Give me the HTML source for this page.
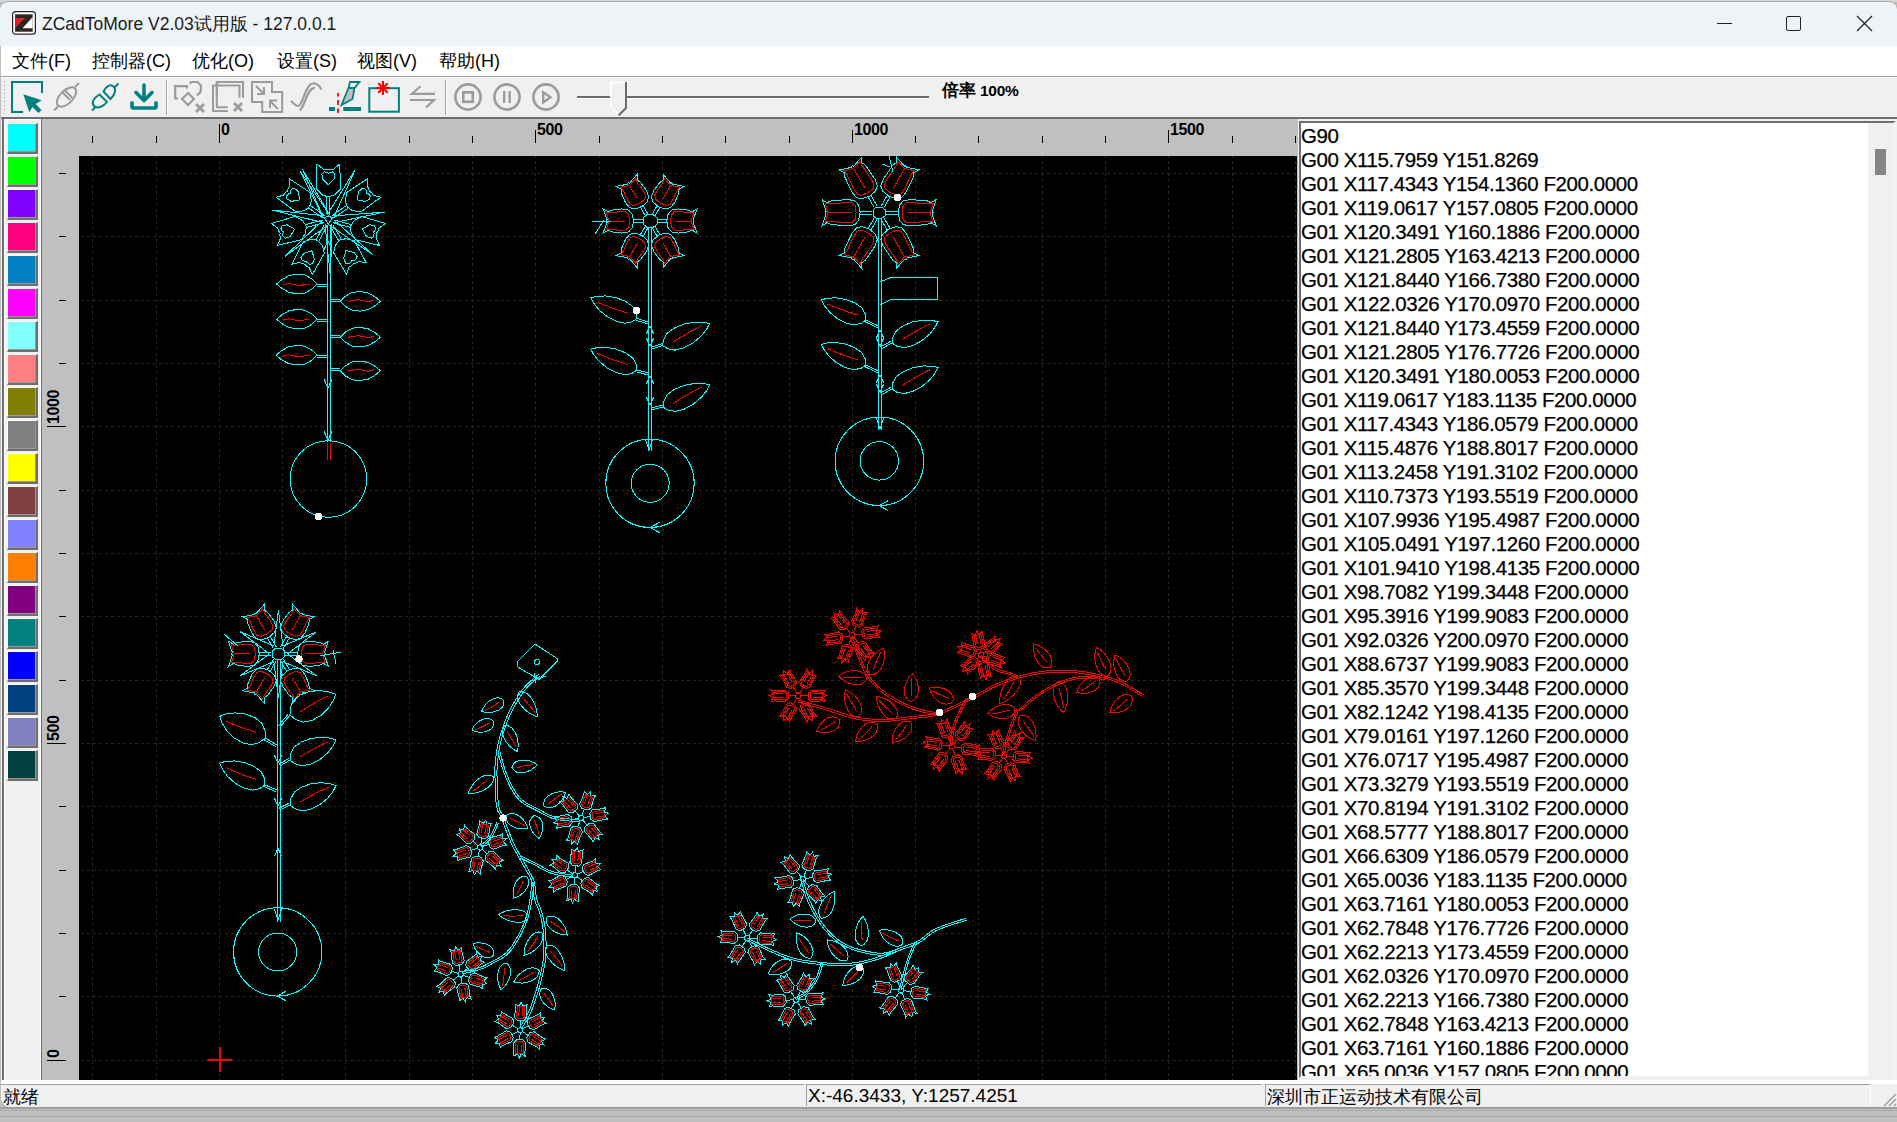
<!DOCTYPE html><html><head><meta charset="utf-8"><style>
*{margin:0;padding:0;box-sizing:border-box}
html,body{width:1897px;height:1122px;overflow:hidden;background:#bfbfbf;font-family:"Liberation Sans",sans-serif;}
.ab{position:absolute}
#title{left:0px;top:1px;width:1897px;height:45px;background:#edf3f7;border-radius:8px 8px 0 0;border-top:1.5px solid #a8a8a8}
#topstrip{left:0;top:0;width:1897px;height:2px;background:#d8d8d8}
#menu{left:1px;top:46px;width:1896px;height:30px;background:#fff}
.mi{position:absolute;top:49px;font-size:18px;color:#000;white-space:nowrap}
#tb{left:1px;top:76px;width:1896px;height:43px;background:#f0f0f0;border-top:1px solid #a0a0a0;border-bottom:2px solid #6e6e6e;box-shadow:inset 0 1px 0 #fff}
#main{left:1px;top:119px;width:1896px;height:967px;background:#f0f0f0}
#pal{left:2px;top:119px;width:39px;height:961px;background:#f0f0f0;border-left:2px solid #6e6e6e;border-right:1px solid #fff;box-shadow:inset 1px 1px 0 #fff}
#pald{left:41px;top:119px;width:1px;height:961px;background:#6e6e6e}
.sw{position:absolute;left:7px;width:31px;height:31px;border-top:1px solid #fff;border-left:1px solid #fff;border-right:2px solid #6e6e6e;border-bottom:2px solid #6e6e6e;box-shadow:inset -1px -1px 0 #a09595}
#rul{left:42px;top:119px;width:1256px;height:961px;background:#c0c0c0}
#cv{left:79px;top:156px;width:1218px;height:924px;background:#000;overflow:hidden}
#txt{left:1299px;top:121px;width:597px;height:957px;background:#fff;border-top:2px solid #6e6e6e;border-left:2px solid #6e6e6e;border-bottom:2px solid #f0f0f0;border-right:3px solid #f4f4f4;overflow:hidden}
.gl{position:absolute;font-size:20.5px;letter-spacing:-0.41px;line-height:24px;color:#000;white-space:pre;-webkit-text-stroke:0.25px #000}
#sb{left:1868px;top:123px;width:25px;height:953px;background:#f0f0f0}
#thumb{left:1875px;top:149px;width:11px;height:26px;background:#858585}
#status{left:1px;top:1084px;width:1896px;height:23px;background:#f0f0f0;border-radius:0 0 0 8px;box-shadow:0 1px 0 #9a9a9a}
.st{position:absolute;top:1085px;font-size:18px;color:#000;white-space:nowrap}
.rl{position:absolute;font-size:16px;font-weight:bold;letter-spacing:-0.4px;color:#000;line-height:16px}
</style></head><body>
<div id="topstrip" class="ab"></div><div id="title" class="ab"></div>
<svg class="ab" style="left:12px;top:11px" width="24" height="24" viewBox="0 0 24 24">
<rect x="0.6" y="0.6" width="22.8" height="22.6" rx="3" fill="#fff" stroke="#2b2220" stroke-width="1.2"/>
<rect x="3.1" y="3.3" width="17.6" height="17.4" fill="#2f2524"/>
<polygon points="3.1,6.9 13,6.9 3.1,17" fill="#e3202a"/>
<polygon points="20.7,6 20.7,17.2 10.5,17.2" fill="#fff"/>
</svg>
<div class="ab" style="left:42px;top:12px;font-size:17.5px;color:#1a1a1a;white-space:nowrap">ZCadToMore V2.03试用版 - 127.0.0.1</div>
<div class="ab" style="left:1717px;top:23px;width:15px;height:1px;background:#222"></div>
<div class="ab" style="left:1786px;top:16px;width:15px;height:15px;border:1.5px solid #222;border-radius:2px"></div>
<svg class="ab" style="left:1856px;top:15px" width="17" height="17"><path d="M1 1L16 16M16 1L1 16" stroke="#222" stroke-width="1.3"/></svg>
<div id="menu" class="ab"></div>
<div class="mi" style="left:12px">文件(F)</div>
<div class="mi" style="left:92px">控制器(C)</div>
<div class="mi" style="left:192px">优化(O)</div>
<div class="mi" style="left:277px">设置(S)</div>
<div class="mi" style="left:357px">视图(V)</div>
<div class="mi" style="left:439px">帮助(H)</div>
<div id="tb" class="ab"></div>
<svg class="ab" style="left:0;top:76px" width="1100" height="42" viewBox="0 76 1100 42">
<g fill="#a8a8a8"><rect x="4" y="81" width="1" height="1"/><rect x="4" y="85" width="1" height="1"/><rect x="4" y="89" width="1" height="1"/><rect x="4" y="93" width="1" height="1"/><rect x="4" y="97" width="1" height="1"/><rect x="4" y="101" width="1" height="1"/><rect x="4" y="105" width="1" height="1"/><rect x="4" y="109" width="1" height="1"/><rect x="4" y="113" width="1" height="1"/></g>
<!-- icon1 select -->
<path d="M23 112H12V82H42V93" fill="none" stroke="#008080" stroke-width="2"/>
<polygon points="23.3,94.2 41.7,100.3 35.6,104 41.5,110 38.5,113 32.4,107 29.3,112.3" fill="#008080"/>
<!-- icon2 plug gray -->
<g fill="none" stroke="#9b9b9b" stroke-width="2">
<path d="M54 110.5L58 106.5"/><path d="M75 87L79 83"/>
<ellipse cx="66.5" cy="97" rx="6.5" ry="12" transform="rotate(45 66.5 97)"/>
<path d="M62 92L70 100M64.5 90L72.5 98"/>
</g>
<!-- icon3 unplug teal -->
<g fill="none" stroke="#008080" stroke-width="2">
<path d="M92 110.5L95.5 107"/><path d="M114.5 87.5L118.5 83.5"/>
<path d="M99.5 94.5L107 102 C103 107 97 109 94 106 C91 103 93.5 98 99.5 94.5Z"/>
<path d="M103.5 91.5L110.5 99 C115 95 116.5 89 113.5 86.5 C110.5 83.5 106 86 103.5 91.5Z"/>
</g>
<!-- icon4 download -->
<g fill="none" stroke="#008080" stroke-width="3.6" stroke-linecap="round" stroke-linejoin="round">
<path d="M144 85V100"/><path d="M136 92.5L144 100.5L152 92.5"/>
<path d="M132 101.5V106.5Q132 108 133.5 108H154.5Q156 108 156 106.5V101.5" stroke-linecap="butt"/>
</g>
<rect x="166" y="80" width="1" height="35" fill="#a0a0a0"/><rect x="167" y="80" width="1" height="35" fill="#fff"/>
<!-- icon5 -->
<g fill="none" stroke="#9b9b9b" stroke-width="2.2">
<path d="M178 98.3H175.2V86.1H186.9V88.6"/>
<path d="M189.5 83.5L191.5 82H197.5L200.8 85.3V91.5L197 95.5"/>
<path d="M188 93L194 99L188 105L182 99Z"/>
</g>
<path d="M196 104L204 112M204 104L196 112" stroke="#9b9b9b" stroke-width="2.8"/>
<!-- icon6 -->
<g fill="none" stroke="#9b9b9b" stroke-width="2">
<path d="M216.8 97.8V82H243V97.8"/>
<path d="M227.8 111H213V85.5H239.5V97.8"/>
<path d="M227.8 107.2H216.8V82"/>
</g>
<path d="M234 103L242 111M242 103L234 111" stroke="#9b9b9b" stroke-width="2.8"/>
<!-- icon7 -->
<g fill="none" stroke="#9b9b9b" stroke-width="2">
<path d="M252 82H272V92H282.2V112H262.2V102H252Z"/>
<path d="M256 86L264 94M257 94H264V87"/>
<path d="M278 109L270 101M277 100.5H270V108"/>
</g>
<!-- icon8 S -->
<g fill="none" stroke="#9b9b9b" stroke-width="2.2">
<path d="M291 101C294 104 296 106 298 106C303 106 305 84 313 83.5C317 83 319.5 86 321.5 89.5"/>
<path d="M300 110.3C305 106 307 88 315 87.5"/>
</g>
<!-- icon9 knife -->
<path d="M338 93V96.5M338 100V105M338 108.5V113" stroke="#ff0000" stroke-width="1.8"/>
<rect x="329" y="107" width="6" height="4" fill="#008080"/><rect x="343.3" y="107" width="17.7" height="4" fill="#008080"/>
<polygon points="349,88.5 354,88.5 352,98 342,104.5" fill="#c0c0c0"/>
<path d="M350 82H359.5L354.5 88H348.5Z M348.5 88L341.5 105L352.5 99L354.5 88" fill="none" stroke="#008080" stroke-width="1.8" stroke-linejoin="miter"/>
<!-- icon10 -->
<rect x="369.3" y="88.2" width="29.6" height="23.5" fill="none" stroke="#008080" stroke-width="2"/>
<path d="M383 81V95M376 88H390M378.3 83.3L387.7 92.7M387.7 83.3L378.3 92.7" stroke="#ff0000" stroke-width="2"/>
<!-- icon11 -->
<g fill="none" stroke="#9b9b9b" stroke-width="2.2">
<path d="M435 93.8H412L420.5 86.3"/><path d="M410 100H434L426 107.5"/>
</g>
<rect x="445" y="80" width="1" height="35" fill="#a0a0a0"/><rect x="446" y="80" width="1" height="35" fill="#fff"/>
<!-- circles -->
<g fill="none" stroke="#9b9b9b" stroke-width="2.6">
<circle cx="468" cy="97" r="12.6"/><rect x="463.3" y="92.3" width="9.5" height="9.5"/>
<circle cx="507" cy="97" r="12.6"/>
<circle cx="546" cy="97" r="12.6"/>
</g>
<rect x="503" y="91" width="2.3" height="12" fill="#9b9b9b"/><rect x="508.5" y="91" width="2.3" height="12" fill="#9b9b9b"/>
<path d="M543.2 92.3V102.5L550.5 97.3Z" fill="none" stroke="#9b9b9b" stroke-width="2.4"/>
<!-- slider -->
<rect x="577" y="96" width="352" height="2" fill="#6b6b6b"/><rect x="577" y="98" width="352" height="1" fill="#fff"/>
<path d="M611 107.5V82.5H626" fill="#f0f0f0" stroke="#fff" stroke-width="1.5"/>
<path d="M611.2 82.5H625.8V107.5L618.5 115L611.2 107.5Z" fill="#f0f0f0" stroke="none"/>
<path d="M611.2 107.5V82.5H625.5" fill="none" stroke="#fff" stroke-width="1.5"/>
<path d="M611.6 107.6L618.3 114.5" fill="none" stroke="#fff" stroke-width="1.2"/>
<path d="M626 82V108L618.5 115.5" fill="none" stroke="#6b6b6b" stroke-width="2"/>
</svg>
<div class="ab" style="left:942px;top:79px;font-size:17px;font-weight:bold;color:#000;white-space:nowrap;letter-spacing:0px">倍率<span style="font-size:15.5px;margin-left:4px;letter-spacing:-0.3px">100%</span></div>

<div id="main" class="ab"></div>
<div id="pal" class="ab"></div><div id="pald" class="ab"></div>
<div class="sw" style="top:123px;background:#00ffff"></div>
<div class="sw" style="top:156px;background:#00ff00"></div>
<div class="sw" style="top:189px;background:#8000ff"></div>
<div class="sw" style="top:222px;background:#ff0080"></div>
<div class="sw" style="top:255px;background:#0080c0"></div>
<div class="sw" style="top:288px;background:#ff00ff"></div>
<div class="sw" style="top:321px;background:#80ffff"></div>
<div class="sw" style="top:354px;background:#ff8080"></div>
<div class="sw" style="top:387px;background:#808000"></div>
<div class="sw" style="top:420px;background:#808080"></div>
<div class="sw" style="top:453px;background:#ffff00"></div>
<div class="sw" style="top:486px;background:#804040"></div>
<div class="sw" style="top:519px;background:#8080ff"></div>
<div class="sw" style="top:552px;background:#ff8000"></div>
<div class="sw" style="top:585px;background:#800080"></div>
<div class="sw" style="top:618px;background:#008080"></div>
<div class="sw" style="top:651px;background:#0000ff"></div>
<div class="sw" style="top:684px;background:#004080"></div>
<div class="sw" style="top:717px;background:#8080c0"></div>
<div class="sw" style="top:750px;background:#004040"></div>
<div id="rul" class="ab"></div>
<div class="ab" style="left:92px;top:136px;width:1px;height:7px;background:#000"></div>
<div class="ab" style="left:156px;top:136px;width:1px;height:7px;background:#000"></div>
<div class="ab" style="left:219px;top:124px;width:1px;height:19px;background:#000"></div>
<div class="rl" style="left:221px;top:122px">0</div>
<div class="ab" style="left:282px;top:136px;width:1px;height:7px;background:#000"></div>
<div class="ab" style="left:345px;top:136px;width:1px;height:7px;background:#000"></div>
<div class="ab" style="left:409px;top:136px;width:1px;height:7px;background:#000"></div>
<div class="ab" style="left:472px;top:136px;width:1px;height:7px;background:#000"></div>
<div class="ab" style="left:535px;top:130px;width:1px;height:13px;background:#000"></div>
<div class="rl" style="left:537px;top:122px">500</div>
<div class="ab" style="left:599px;top:136px;width:1px;height:7px;background:#000"></div>
<div class="ab" style="left:662px;top:136px;width:1px;height:7px;background:#000"></div>
<div class="ab" style="left:725px;top:136px;width:1px;height:7px;background:#000"></div>
<div class="ab" style="left:789px;top:136px;width:1px;height:7px;background:#000"></div>
<div class="ab" style="left:852px;top:130px;width:1px;height:13px;background:#000"></div>
<div class="rl" style="left:854px;top:122px">1000</div>
<div class="ab" style="left:915px;top:136px;width:1px;height:7px;background:#000"></div>
<div class="ab" style="left:978px;top:136px;width:1px;height:7px;background:#000"></div>
<div class="ab" style="left:1042px;top:136px;width:1px;height:7px;background:#000"></div>
<div class="ab" style="left:1105px;top:136px;width:1px;height:7px;background:#000"></div>
<div class="ab" style="left:1168px;top:130px;width:1px;height:13px;background:#000"></div>
<div class="rl" style="left:1170px;top:122px">1500</div>
<div class="ab" style="left:1232px;top:136px;width:1px;height:7px;background:#000"></div>
<div class="ab" style="left:1295px;top:136px;width:1px;height:7px;background:#000"></div>
<div class="ab" style="left:47px;top:1060px;width:19px;height:1px;background:#000"></div>
<div class="rl" style="left:46px;top:1058px;transform-origin:0 0;transform:rotate(-90deg)">0</div>
<div class="ab" style="left:59px;top:996px;width:7px;height:1px;background:#000"></div>
<div class="ab" style="left:59px;top:933px;width:7px;height:1px;background:#000"></div>
<div class="ab" style="left:59px;top:870px;width:7px;height:1px;background:#000"></div>
<div class="ab" style="left:59px;top:806px;width:7px;height:1px;background:#000"></div>
<div class="ab" style="left:47px;top:743px;width:19px;height:1px;background:#000"></div>
<div class="rl" style="left:46px;top:741px;transform-origin:0 0;transform:rotate(-90deg)">500</div>
<div class="ab" style="left:59px;top:680px;width:7px;height:1px;background:#000"></div>
<div class="ab" style="left:59px;top:616px;width:7px;height:1px;background:#000"></div>
<div class="ab" style="left:59px;top:553px;width:7px;height:1px;background:#000"></div>
<div class="ab" style="left:59px;top:490px;width:7px;height:1px;background:#000"></div>
<div class="ab" style="left:47px;top:426px;width:19px;height:1px;background:#000"></div>
<div class="rl" style="left:46px;top:424px;transform-origin:0 0;transform:rotate(-90deg)">1000</div>
<div class="ab" style="left:59px;top:363px;width:7px;height:1px;background:#000"></div>
<div class="ab" style="left:59px;top:300px;width:7px;height:1px;background:#000"></div>
<div class="ab" style="left:59px;top:236px;width:7px;height:1px;background:#000"></div>
<div class="ab" style="left:59px;top:173px;width:7px;height:1px;background:#000"></div>
<div id="cv" class="ab"><svg width="1218" height="924" style="position:absolute;left:0;top:0">
<g stroke="#242424" stroke-width="1" stroke-dasharray="3,3" shape-rendering="crispEdges"><line x1="13.5" y1="0" x2="13.5" y2="924" stroke-dashoffset="1"/><line x1="77.5" y1="0" x2="77.5" y2="924" stroke-dashoffset="1"/><line x1="140.5" y1="0" x2="140.5" y2="924" stroke-dashoffset="1"/><line x1="203.5" y1="0" x2="203.5" y2="924" stroke-dashoffset="1"/><line x1="266.5" y1="0" x2="266.5" y2="924" stroke-dashoffset="1"/><line x1="330.5" y1="0" x2="330.5" y2="924" stroke-dashoffset="1"/><line x1="393.5" y1="0" x2="393.5" y2="924" stroke-dashoffset="1"/><line x1="456.5" y1="0" x2="456.5" y2="924" stroke-dashoffset="1"/><line x1="520.5" y1="0" x2="520.5" y2="924" stroke-dashoffset="1"/><line x1="583.5" y1="0" x2="583.5" y2="924" stroke-dashoffset="1"/><line x1="646.5" y1="0" x2="646.5" y2="924" stroke-dashoffset="1"/><line x1="710.5" y1="0" x2="710.5" y2="924" stroke-dashoffset="1"/><line x1="773.5" y1="0" x2="773.5" y2="924" stroke-dashoffset="1"/><line x1="836.5" y1="0" x2="836.5" y2="924" stroke-dashoffset="1"/><line x1="899.5" y1="0" x2="899.5" y2="924" stroke-dashoffset="1"/><line x1="963.5" y1="0" x2="963.5" y2="924" stroke-dashoffset="1"/><line x1="1026.5" y1="0" x2="1026.5" y2="924" stroke-dashoffset="1"/><line x1="1089.5" y1="0" x2="1089.5" y2="924" stroke-dashoffset="1"/><line x1="1153.5" y1="0" x2="1153.5" y2="924" stroke-dashoffset="1"/><line x1="1216.5" y1="0" x2="1216.5" y2="924" stroke-dashoffset="1"/><line x1="0" y1="904.5" x2="1218" y2="904.5" stroke-dashoffset="4"/><line x1="0" y1="840.5" x2="1218" y2="840.5" stroke-dashoffset="4"/><line x1="0" y1="777.5" x2="1218" y2="777.5" stroke-dashoffset="4"/><line x1="0" y1="714.5" x2="1218" y2="714.5" stroke-dashoffset="4"/><line x1="0" y1="650.5" x2="1218" y2="650.5" stroke-dashoffset="4"/><line x1="0" y1="587.5" x2="1218" y2="587.5" stroke-dashoffset="4"/><line x1="0" y1="524.5" x2="1218" y2="524.5" stroke-dashoffset="4"/><line x1="0" y1="460.5" x2="1218" y2="460.5" stroke-dashoffset="4"/><line x1="0" y1="397.5" x2="1218" y2="397.5" stroke-dashoffset="4"/><line x1="0" y1="334.5" x2="1218" y2="334.5" stroke-dashoffset="4"/><line x1="0" y1="270.5" x2="1218" y2="270.5" stroke-dashoffset="4"/><line x1="0" y1="207.5" x2="1218" y2="207.5" stroke-dashoffset="4"/><line x1="0" y1="144.5" x2="1218" y2="144.5" stroke-dashoffset="4"/><line x1="0" y1="80.5" x2="1218" y2="80.5" stroke-dashoffset="4"/><line x1="0" y1="17.5" x2="1218" y2="17.5" stroke-dashoffset="4"/></g>
<g transform="translate(-79,-156)" fill="none" stroke-width="1" shape-rendering="crispEdges">
<path d="M322.4 195.0 L328.4 197.0 L334.4 195.0 L340.4 189.0 L339.8 164.0 L333.8 169.0 L330.8 169.0 L328.4 170.0 L326.0 169.0 L323.0 169.0 L317.0 164.0 L316.4 189.0 Z" stroke="#00ffff" fill="none"/>
<path d="M328.4 184.9 L322.4 178.9 L321.9 173.9 L324.4 171.9 L327.4 172.4 L328.4 173.4 L329.4 172.4 L332.4 171.9 L334.9 173.9 L334.4 178.9 Z" stroke="#00ffff" fill="none"/>
<path d="M326.9 214.0 L326.9 196.0" stroke="#00ffff" fill="none"/>
<path d="M329.9 214.0 L329.9 196.0" stroke="#00ffff" fill="none"/>
<path d="M345.4 200.7 L347.2 206.8 L352.3 210.6 L360.7 212.0 L380.8 197.2 L373.3 195.2 L371.6 192.7 L369.4 191.3 L368.8 188.8 L367.1 186.3 L367.7 178.5 L346.9 192.4 Z" stroke="#00ffff" fill="none"/>
<path d="M357.1 199.9 L358.6 191.5 L362.4 188.3 L365.5 189.2 L366.8 191.9 L366.5 193.3 L367.9 193.5 L370.1 195.7 L369.9 198.9 L365.5 201.4 Z" stroke="#00ffff" fill="none"/>
<path d="M332.5 215.3 L347.2 205.0" stroke="#00ffff" fill="none"/>
<path d="M334.2 217.8 L348.9 207.5" stroke="#00ffff" fill="none"/>
<path d="M354.1 220.7 L350.6 226.0 L351.0 232.3 L355.2 239.6 L379.5 245.5 L376.3 238.4 L377.0 235.5 L376.7 232.9 L378.3 230.9 L379.1 228.0 L385.4 223.5 L361.4 216.4 Z" stroke="#00ffff" fill="none"/>
<path d="M362.3 229.1 L369.6 224.8 L374.6 225.6 L375.8 228.6 L374.6 231.3 L373.4 232.0 L374.1 233.3 L373.8 236.3 L371.2 238.2 L366.5 236.4 Z" stroke="#00ffff" fill="none"/>
<path d="M334.6 220.1 L352.0 224.8" stroke="#00ffff" fill="none"/>
<path d="M333.8 223.0 L351.2 227.7" stroke="#00ffff" fill="none"/>
<path d="M346.1 238.7 L339.9 239.9 L335.7 244.7 L333.5 252.8 L346.5 274.2 L349.2 266.9 L351.8 265.4 L353.4 263.3 L356.0 263.0 L358.6 261.5 L366.3 262.8 L354.3 240.8 Z" stroke="#00ffff" fill="none"/>
<path d="M345.9 250.4 L354.1 252.6 L357.1 256.6 L355.9 259.6 L353.0 260.7 L351.7 260.3 L351.3 261.7 L349.0 263.6 L345.8 263.1 L343.7 258.6 Z" stroke="#00ffff" fill="none"/>
<path d="M332.7 224.4 L341.7 240.0" stroke="#00ffff" fill="none"/>
<path d="M330.1 225.9 L339.1 241.5" stroke="#00ffff" fill="none"/>
<path d="M322.0 244.9 L317.6 240.3 L311.4 239.3 L303.3 241.7 L292.0 264.1 L299.7 262.5 L302.3 263.9 L304.9 264.1 L306.6 266.2 L309.2 267.6 L312.2 274.8 L324.4 253.0 Z" stroke="#00ffff" fill="none"/>
<path d="M311.9 250.9 L314.4 259.1 L312.5 263.7 L309.4 264.3 L307.0 262.5 L306.5 261.1 L305.2 261.5 L302.3 260.5 L301.0 257.6 L303.8 253.4 Z" stroke="#00ffff" fill="none"/>
<path d="M326.9 226.0 L318.5 241.9" stroke="#00ffff" fill="none"/>
<path d="M324.3 224.6 L315.8 240.5" stroke="#00ffff" fill="none"/>
<path d="M305.8 232.3 L306.2 226.0 L302.7 220.7 L295.4 216.4 L271.4 223.5 L277.7 228.0 L278.5 230.9 L280.1 232.9 L279.8 235.5 L280.5 238.4 L277.3 245.5 L301.6 239.6 Z" stroke="#00ffff" fill="none"/>
<path d="M294.5 229.1 L290.3 236.4 L285.6 238.2 L283.0 236.3 L282.7 233.3 L283.4 232.0 L282.2 231.3 L281.0 228.6 L282.2 225.6 L287.2 224.8 Z" stroke="#00ffff" fill="none"/>
<path d="M323.0 223.0 L305.6 227.7" stroke="#00ffff" fill="none"/>
<path d="M322.2 220.1 L304.8 224.8" stroke="#00ffff" fill="none"/>
<path d="M304.5 210.6 L309.6 206.8 L311.4 200.7 L309.9 192.4 L289.1 178.5 L289.7 186.3 L288.0 188.8 L287.4 191.3 L285.2 192.7 L283.5 195.2 L276.0 197.2 L296.1 212.0 Z" stroke="#00ffff" fill="none"/>
<path d="M299.7 199.9 L291.3 201.4 L286.9 198.9 L286.7 195.7 L288.9 193.5 L290.3 193.3 L290.0 191.9 L291.3 189.2 L294.4 188.3 L298.2 191.5 Z" stroke="#00ffff" fill="none"/>
<path d="M322.6 217.8 L307.9 207.5" stroke="#00ffff" fill="none"/>
<path d="M324.3 215.3 L309.6 205.0" stroke="#00ffff" fill="none"/>
<path d="M323.5 218.0 L302.5 169.2 L329.7 214.8" stroke="#00ffff" fill="none"/>
<path d="M327.2 214.8 L355.2 169.7 L333.4 218.1" stroke="#00ffff" fill="none"/>
<path d="M331.9 216.0 L384.8 212.1 L332.8 222.9" stroke="#00ffff" fill="none"/>
<path d="M333.7 219.7 L373.3 255.1 L329.4 225.2" stroke="#00ffff" fill="none"/>
<path d="M332.0 223.9 L330.4 277.0 L325.0 224.1" stroke="#00ffff" fill="none"/>
<path d="M327.6 225.3 L284.7 256.6 L323.1 219.9" stroke="#00ffff" fill="none"/>
<path d="M323.9 222.8 L272.3 210.1 L325.1 215.9" stroke="#00ffff" fill="none"/>
<path d="M323.4 218.3 L299.9 170.6 L329.4 214.8" stroke="#00ffff" fill="none"/>
<path d="M324.4 218.0 L328.4 216.0 L332.4 218.0 L328.4 224.0 Z" stroke="#00ffff" fill="none"/>
<path d="M327.5 226.0 L327.5 442.0" stroke="#00ffff" fill="none"/>
<path d="M330.0 226.0 L330.0 442.0" stroke="#00ffff" fill="none"/>
<path d="M327.0 443.0 L327.0 460.0" stroke="#ff0000" fill="none"/>
<path d="M330.5 443.0 L330.5 460.0" stroke="#ff0000" fill="none"/>
<circle cx="328.4" cy="479.0" r="38.3" stroke="#00ffff" fill="none"/>
<path d="M317.0 284.0 L312.2 288.9 L304.9 293.0 L296.8 293.8 L288.7 292.3 L281.9 288.4 L276.6 284.0 L281.9 279.6 L288.7 275.7 L296.8 274.2 L304.9 275.0 L312.2 279.1 Z" stroke="#00ffff" fill="none"/>
<path d="M308.9 284.0 L298.8 285.6 L288.7 283.6 L282.7 285.0" stroke="#ff0000" fill="none"/>
<path d="M317.0 284.0 L327.0 284.0" stroke="#00ffff" fill="none"/>
<path d="M317.0 286.0 L327.0 286.0" stroke="#00ffff" fill="none"/>
<path d="M317.0 319.2 L312.2 324.1 L304.9 328.2 L296.8 328.9 L288.7 327.5 L281.9 323.6 L276.6 319.2 L281.9 314.8 L288.7 310.9 L296.8 309.4 L304.9 310.2 L312.2 314.3 Z" stroke="#00ffff" fill="none"/>
<path d="M308.9 319.2 L298.8 320.8 L288.7 318.8 L282.7 320.2" stroke="#ff0000" fill="none"/>
<path d="M317.0 319.2 L327.0 319.2" stroke="#00ffff" fill="none"/>
<path d="M317.0 321.2 L327.0 321.2" stroke="#00ffff" fill="none"/>
<path d="M317.0 355.2 L312.1 360.1 L304.7 364.2 L296.5 364.9 L288.3 363.5 L281.3 359.6 L276.0 355.2 L281.3 350.8 L288.3 346.9 L296.5 345.4 L304.7 346.2 L312.1 350.3 Z" stroke="#00ffff" fill="none"/>
<path d="M308.8 355.2 L298.6 356.8 L288.3 354.8 L282.1 356.2" stroke="#ff0000" fill="none"/>
<path d="M317.0 355.2 L327.0 355.2" stroke="#00ffff" fill="none"/>
<path d="M317.0 357.2 L327.0 357.2" stroke="#00ffff" fill="none"/>
<path d="M340.3 301.3 L345.1 296.4 L352.3 292.3 L360.3 291.6 L368.3 293.0 L375.1 296.9 L380.3 301.3 L375.1 305.7 L368.3 309.6 L360.3 311.1 L352.3 310.3 L345.1 306.2 Z" stroke="#00ffff" fill="none"/>
<path d="M348.3 301.3 L358.3 299.7 L368.3 301.7 L374.3 300.3" stroke="#ff0000" fill="none"/>
<path d="M340.3 301.3 L330.5 301.3" stroke="#00ffff" fill="none"/>
<path d="M340.3 299.3 L330.5 299.3" stroke="#00ffff" fill="none"/>
<path d="M340.3 337.2 L345.1 332.3 L352.3 328.2 L360.3 327.4 L368.3 328.9 L375.1 332.8 L380.3 337.2 L375.1 341.6 L368.3 345.5 L360.3 346.9 L352.3 346.2 L345.1 342.1 Z" stroke="#00ffff" fill="none"/>
<path d="M348.3 337.2 L358.3 335.6 L368.3 337.6 L374.3 336.2" stroke="#ff0000" fill="none"/>
<path d="M340.3 337.2 L330.5 337.2" stroke="#00ffff" fill="none"/>
<path d="M340.3 335.2 L330.5 335.2" stroke="#00ffff" fill="none"/>
<path d="M340.3 370.8 L345.1 365.9 L352.3 361.8 L360.3 361.1 L368.3 362.5 L375.1 366.4 L380.3 370.8 L375.1 375.2 L368.3 379.1 L360.3 380.6 L352.3 379.8 L345.1 375.7 Z" stroke="#00ffff" fill="none"/>
<path d="M348.3 370.8 L358.3 369.2 L368.3 371.2 L374.3 369.8" stroke="#ff0000" fill="none"/>
<path d="M340.3 370.8 L330.5 370.8" stroke="#00ffff" fill="none"/>
<path d="M340.3 368.8 L330.5 368.8" stroke="#00ffff" fill="none"/>
<path d="M328.0 241.0 L332.2 250.1" stroke="#00ffff" fill="none"/>
<path d="M328.0 241.0 L323.8 250.1" stroke="#00ffff" fill="none"/>
<path d="M328.0 388.0 L323.8 378.9" stroke="#00ffff" fill="none"/>
<path d="M328.0 388.0 L332.2 378.9" stroke="#00ffff" fill="none"/>
<path d="M328.0 440.0 L323.8 430.9" stroke="#00ffff" fill="none"/>
<path d="M328.0 440.0 L332.2 430.9" stroke="#00ffff" fill="none"/>
<circle cx="318.5" cy="516.5" r="3.6" fill="#fff" stroke="none"/>
<path d="M641.9 206.7 L635.1 208.9 L629.9 207.8 L625.4 202.4 L621.6 193.6 L621.1 189.2 L616.1 186.3 L627.6 184.3 L628.1 182.9 L629.6 183.2 L637.1 174.3 L637.1 180.0 L640.6 182.6 L646.3 190.3 L648.8 196.9 L647.1 202.0 Z" stroke="#00ffff" fill="none"/>
<path d="M639.9 203.2 L633.9 205.5 L630.1 204.3 L626.4 198.3 L623.6 191.3 L620.6 187.2 L629.6 185.5 L635.6 178.6 L637.6 183.2 L642.3 189.1 L645.6 195.3 L644.8 199.2 Z" stroke="#ff0000" fill="none"/>
<path d="M637.4 198.9 L629.6 185.5" stroke="#ff0000" fill="none"/>
<path d="M645.2 215.7 L640.0 206.6" stroke="#00ffff" fill="none"/>
<path d="M648.0 214.1 L642.7 205.0" stroke="#00ffff" fill="none"/>
<path d="M658.4 206.7 L653.1 202.0 L651.4 196.9 L653.9 190.3 L659.6 182.6 L663.1 180.0 L663.1 174.3 L670.6 183.2 L672.1 182.9 L672.6 184.3 L684.1 186.3 L679.1 189.2 L678.6 193.6 L674.8 202.4 L670.3 207.8 L665.1 208.9 Z" stroke="#00ffff" fill="none"/>
<path d="M660.4 203.2 L655.4 199.2 L654.6 195.3 L657.9 189.1 L662.6 183.2 L664.6 178.6 L670.6 185.5 L679.6 187.2 L676.6 191.3 L673.8 198.3 L670.1 204.3 L666.3 205.5 Z" stroke="#ff0000" fill="none"/>
<path d="M662.9 198.9 L670.6 185.5" stroke="#ff0000" fill="none"/>
<path d="M652.2 214.1 L657.5 205.0" stroke="#00ffff" fill="none"/>
<path d="M655.0 215.7 L660.2 206.6" stroke="#00ffff" fill="none"/>
<path d="M666.6 221.0 L668.1 214.1 L671.6 210.1 L678.6 208.9 L688.1 210.1 L692.1 211.8 L697.1 208.9 L693.1 219.8 L694.1 221.0 L693.1 222.2 L697.1 233.1 L692.1 230.2 L688.1 231.9 L678.6 233.1 L671.6 231.9 L668.1 227.9 Z" stroke="#00ffff" fill="none"/>
<path d="M670.6 221.0 L671.6 214.7 L674.6 212.0 L681.6 211.8 L689.1 212.9 L694.1 212.4 L691.1 221.0 L694.1 229.6 L689.1 229.1 L681.6 230.2 L674.6 230.0 L671.6 227.3 Z" stroke="#ff0000" fill="none"/>
<path d="M675.6 221.0 L691.1 221.0" stroke="#ff0000" fill="none"/>
<path d="M657.1 219.4 L667.6 219.4" stroke="#00ffff" fill="none"/>
<path d="M657.1 222.6 L667.6 222.6" stroke="#00ffff" fill="none"/>
<path d="M658.4 235.3 L665.1 233.1 L670.3 234.2 L674.8 239.6 L678.6 248.4 L679.1 252.8 L684.1 255.7 L672.6 257.7 L672.1 259.1 L670.6 258.8 L663.1 267.7 L663.1 262.0 L659.6 259.4 L653.9 251.7 L651.4 245.1 L653.1 240.0 Z" stroke="#00ffff" fill="none"/>
<path d="M660.4 238.8 L666.3 236.5 L670.1 237.7 L673.8 243.7 L676.6 250.7 L679.6 254.8 L670.6 256.5 L664.6 263.4 L662.6 258.8 L657.9 252.9 L654.6 246.7 L655.4 242.8 Z" stroke="#ff0000" fill="none"/>
<path d="M662.9 243.1 L670.6 256.5" stroke="#ff0000" fill="none"/>
<path d="M655.0 226.3 L660.2 235.4" stroke="#00ffff" fill="none"/>
<path d="M652.2 227.9 L657.5 237.0" stroke="#00ffff" fill="none"/>
<path d="M641.9 235.3 L647.1 240.0 L648.8 245.1 L646.3 251.7 L640.6 259.4 L637.1 262.0 L637.1 267.7 L629.6 258.8 L628.1 259.1 L627.6 257.7 L616.1 255.7 L621.1 252.8 L621.6 248.4 L625.4 239.6 L629.9 234.2 L635.1 233.1 Z" stroke="#00ffff" fill="none"/>
<path d="M639.9 238.8 L644.8 242.8 L645.6 246.7 L642.3 252.9 L637.6 258.8 L635.6 263.4 L629.6 256.5 L620.6 254.8 L623.6 250.7 L626.4 243.7 L630.1 237.7 L633.9 236.5 Z" stroke="#ff0000" fill="none"/>
<path d="M637.4 243.1 L629.6 256.5" stroke="#ff0000" fill="none"/>
<path d="M648.0 227.9 L642.7 237.0" stroke="#00ffff" fill="none"/>
<path d="M645.2 226.3 L640.0 235.4" stroke="#00ffff" fill="none"/>
<path d="M633.6 221.0 L632.1 227.9 L628.6 231.9 L621.6 233.1 L612.1 231.9 L608.1 230.2 L603.1 233.1 L607.1 222.2 L606.1 221.0 L607.1 219.8 L603.1 208.9 L608.1 211.8 L612.1 210.1 L621.6 208.9 L628.6 210.1 L632.1 214.1 Z" stroke="#00ffff" fill="none"/>
<path d="M629.6 221.0 L628.6 227.3 L625.6 230.0 L618.6 230.2 L611.1 229.1 L606.1 229.6 L609.1 221.0 L606.1 212.4 L611.1 212.9 L618.6 211.8 L625.6 212.0 L628.6 214.7 Z" stroke="#ff0000" fill="none"/>
<path d="M624.6 221.0 L609.1 221.0" stroke="#ff0000" fill="none"/>
<path d="M643.1 222.6 L632.6 222.6" stroke="#00ffff" fill="none"/>
<path d="M643.1 219.4 L632.6 219.4" stroke="#00ffff" fill="none"/>
<path d="M643.1 218.0 L647.1 214.5 L653.1 214.5 L657.1 218.0 L657.1 224.0 L653.1 227.5 L647.1 227.5 L643.1 224.0 Z" stroke="#00ffff" fill="none"/>
<path d="M648.4 228.0 L648.4 451.0" stroke="#00ffff" fill="none"/>
<path d="M651.7 228.0 L651.7 451.0" stroke="#00ffff" fill="none"/>
<path d="M592.0 222.0 L611.0 221.0" stroke="#00ffff" fill="none"/>
<path d="M595.0 234.0 L604.0 220.0" stroke="#00ffff" fill="none"/>
<path d="M637.0 318.5 L632.2 321.8 L624.8 323.3 L616.3 321.3 L607.3 316.7 L599.1 310.0 L593.8 303.4 L590.7 297.8 L596.9 296.4 L605.4 295.9 L615.8 297.6 L625.3 301.2 L632.5 306.2 L636.2 312.7 Z" stroke="#00ffff" fill="none"/>
<path d="M628.2 313.4 L618.5 310.2 L608.9 306.9 L597.1 302.1" stroke="#ff0000" fill="none"/>
<path d="M637.0 318.5 L648.4 322.0" stroke="#00ffff" fill="none"/>
<path d="M636.4 320.4 L647.8 323.9" stroke="#00ffff" fill="none"/>
<path d="M662.7 345.6 L663.4 339.8 L667.2 333.2 L674.5 327.9 L684.1 324.0 L694.7 322.1 L703.4 322.2 L709.7 323.5 L706.6 329.2 L701.2 336.0 L693.0 342.9 L683.8 347.8 L675.1 350.1 L667.6 348.8 Z" stroke="#00ffff" fill="none"/>
<path d="M672.6 342.2 L681.5 336.8 L690.5 331.5 L702.1 325.6" stroke="#ff0000" fill="none"/>
<path d="M662.7 345.6 L651.7 349.0" stroke="#00ffff" fill="none"/>
<path d="M662.1 343.7 L651.1 347.1" stroke="#00ffff" fill="none"/>
<path d="M637.0 370.0 L632.2 373.3 L624.8 374.8 L616.3 372.7 L607.2 368.0 L599.1 361.3 L593.7 354.7 L590.7 349.1 L596.9 347.7 L605.4 347.3 L615.8 349.0 L625.3 352.7 L632.5 357.7 L636.3 364.2 Z" stroke="#00ffff" fill="none"/>
<path d="M628.2 364.8 L618.5 361.6 L608.9 358.3 L597.1 353.4" stroke="#ff0000" fill="none"/>
<path d="M637.0 370.0 L648.4 373.0" stroke="#00ffff" fill="none"/>
<path d="M636.5 371.9 L647.9 374.9" stroke="#00ffff" fill="none"/>
<path d="M663.0 407.0 L663.7 401.2 L667.4 394.6 L674.6 389.3 L684.2 385.4 L694.7 383.4 L703.4 383.5 L709.7 384.8 L706.7 390.5 L701.3 397.3 L693.2 404.2 L684.1 409.2 L675.4 411.4 L667.9 410.1 Z" stroke="#00ffff" fill="none"/>
<path d="M672.8 403.6 L681.7 398.1 L690.6 392.9 L702.1 386.9" stroke="#ff0000" fill="none"/>
<path d="M663.0 407.0 L651.7 410.0" stroke="#00ffff" fill="none"/>
<path d="M662.5 405.1 L651.2 408.1" stroke="#00ffff" fill="none"/>
<path d="M650.0 326.0 L653.8 334.2" stroke="#00ffff" fill="none"/>
<path d="M650.0 326.0 L646.2 334.2" stroke="#00ffff" fill="none"/>
<path d="M650.0 346.0 L646.2 337.8" stroke="#00ffff" fill="none"/>
<path d="M650.0 346.0 L653.8 337.8" stroke="#00ffff" fill="none"/>
<path d="M650.0 376.0 L653.8 384.2" stroke="#00ffff" fill="none"/>
<path d="M650.0 376.0 L646.2 384.2" stroke="#00ffff" fill="none"/>
<path d="M650.0 405.0 L646.2 396.8" stroke="#00ffff" fill="none"/>
<path d="M650.0 405.0 L653.8 396.8" stroke="#00ffff" fill="none"/>
<path d="M649.0 450.0 L645.3 438.6" stroke="#00ffff" fill="none"/>
<path d="M649.0 450.0 L652.7 438.6" stroke="#00ffff" fill="none"/>
<circle cx="650.0" cy="483.3" r="44.2" stroke="#00ffff" fill="none"/>
<circle cx="650.2" cy="483.3" r="19.0" stroke="#00ffff" fill="none"/>
<path d="M650.0 527.5 L659.7 522.3" stroke="#00ffff" fill="none"/>
<path d="M650.0 527.5 L659.7 532.7" stroke="#00ffff" fill="none"/>
<circle cx="636.5" cy="310.5" r="3.6" fill="#fff" stroke="none"/>
<path d="M869.6 196.2 L862.4 198.7 L856.8 197.9 L852.2 192.4 L844.8 177.1 L844.4 172.7 L839.2 169.9 L851.5 167.4 L852.1 165.9 L853.7 166.2 L862.0 156.8 L861.8 162.7 L865.4 165.2 L875.0 179.3 L877.4 186.0 L875.3 191.2 Z" stroke="#00ffff" fill="none"/>
<path d="M867.6 192.8 L861.1 195.4 L857.2 194.2 L853.4 188.3 L847.0 174.6 L844.0 170.6 L853.6 168.5 L860.2 161.2 L862.2 165.9 L870.8 178.3 L874.0 184.4 L873.1 188.5 Z" stroke="#ff0000" fill="none"/>
<path d="M865.1 188.5 L853.6 168.5" stroke="#ff0000" fill="none"/>
<path d="M874.2 207.4 L867.7 196.2" stroke="#00ffff" fill="none"/>
<path d="M877.0 205.8 L870.5 194.6" stroke="#00ffff" fill="none"/>
<path d="M888.6 196.2 L882.9 191.2 L880.8 186.0 L883.2 179.3 L892.8 165.2 L896.4 162.7 L896.2 156.8 L904.5 166.2 L906.1 165.9 L906.7 167.4 L919.0 169.9 L913.8 172.7 L913.4 177.1 L906.0 192.4 L901.4 197.9 L895.8 198.7 Z" stroke="#00ffff" fill="none"/>
<path d="M890.6 192.8 L885.1 188.5 L884.2 184.4 L887.4 178.3 L896.0 165.9 L898.0 161.2 L904.6 168.5 L914.2 170.6 L911.2 174.6 L904.8 188.3 L901.0 194.2 L897.1 195.4 Z" stroke="#ff0000" fill="none"/>
<path d="M893.1 188.5 L904.6 168.5" stroke="#ff0000" fill="none"/>
<path d="M881.2 205.8 L887.7 194.6" stroke="#00ffff" fill="none"/>
<path d="M884.0 207.4 L890.5 196.2" stroke="#00ffff" fill="none"/>
<path d="M898.1 212.7 L899.6 205.2 L903.1 200.8 L910.1 199.6 L927.1 200.8 L931.1 202.7 L936.1 199.6 L932.1 211.4 L933.1 212.7 L932.1 213.9 L936.1 225.8 L931.1 222.7 L927.1 224.6 L910.1 225.8 L903.1 224.6 L899.6 220.2 Z" stroke="#00ffff" fill="none"/>
<path d="M902.1 212.7 L903.1 205.8 L906.1 202.9 L913.1 202.7 L928.1 203.9 L933.1 203.3 L930.1 212.7 L933.1 222.1 L928.1 221.4 L913.1 222.7 L906.1 222.4 L903.1 219.6 Z" stroke="#ff0000" fill="none"/>
<path d="M907.1 212.7 L930.1 212.7" stroke="#ff0000" fill="none"/>
<path d="M886.1 211.1 L899.1 211.1" stroke="#00ffff" fill="none"/>
<path d="M886.1 214.3 L899.1 214.3" stroke="#00ffff" fill="none"/>
<path d="M888.6 229.2 L895.8 226.7 L901.4 227.5 L906.0 233.0 L913.4 248.3 L913.8 252.7 L919.0 255.5 L906.7 258.0 L906.1 259.5 L904.5 259.2 L896.2 268.6 L896.4 262.7 L892.8 260.2 L883.2 246.1 L880.8 239.4 L882.9 234.2 Z" stroke="#00ffff" fill="none"/>
<path d="M890.6 232.6 L897.1 230.0 L901.0 231.2 L904.8 237.1 L911.2 250.8 L914.2 254.8 L904.6 256.9 L898.0 264.2 L896.0 259.5 L887.4 247.1 L884.2 241.0 L885.1 236.9 Z" stroke="#ff0000" fill="none"/>
<path d="M893.1 236.9 L904.6 256.9" stroke="#ff0000" fill="none"/>
<path d="M884.0 218.0 L890.5 229.2" stroke="#00ffff" fill="none"/>
<path d="M881.2 219.6 L887.7 230.8" stroke="#00ffff" fill="none"/>
<path d="M869.6 229.2 L875.3 234.2 L877.4 239.4 L875.0 246.1 L865.4 260.2 L861.8 262.7 L862.0 268.6 L853.7 259.2 L852.1 259.5 L851.5 258.0 L839.2 255.5 L844.4 252.7 L844.8 248.3 L852.2 233.0 L856.8 227.5 L862.4 226.7 Z" stroke="#00ffff" fill="none"/>
<path d="M867.6 232.6 L873.1 236.9 L874.0 241.0 L870.8 247.1 L862.2 259.5 L860.2 264.2 L853.6 256.9 L844.0 254.8 L847.0 250.8 L853.4 237.1 L857.2 231.2 L861.1 230.0 Z" stroke="#ff0000" fill="none"/>
<path d="M865.1 236.9 L853.6 256.9" stroke="#ff0000" fill="none"/>
<path d="M877.0 219.6 L870.5 230.8" stroke="#00ffff" fill="none"/>
<path d="M874.2 218.0 L867.7 229.2" stroke="#00ffff" fill="none"/>
<path d="M860.1 212.7 L858.6 220.2 L855.1 224.6 L848.1 225.8 L831.1 224.6 L827.1 222.7 L822.1 225.8 L826.1 213.9 L825.1 212.7 L826.1 211.4 L822.1 199.6 L827.1 202.7 L831.1 200.8 L848.1 199.6 L855.1 200.8 L858.6 205.2 Z" stroke="#00ffff" fill="none"/>
<path d="M856.1 212.7 L855.1 219.6 L852.1 222.4 L845.1 222.7 L830.1 221.4 L825.1 222.1 L828.1 212.7 L825.1 203.3 L830.1 203.9 L845.1 202.7 L852.1 202.9 L855.1 205.8 Z" stroke="#ff0000" fill="none"/>
<path d="M851.1 212.7 L828.1 212.7" stroke="#ff0000" fill="none"/>
<path d="M872.1 214.3 L859.1 214.3" stroke="#00ffff" fill="none"/>
<path d="M872.1 211.1 L859.1 211.1" stroke="#00ffff" fill="none"/>
<path d="M873.1 209.7 L876.1 207.2 L882.1 207.2 L885.1 209.7 L885.1 215.7 L882.1 218.2 L876.1 218.2 L873.1 215.7 Z" stroke="#00ffff" fill="none"/>
<path d="M878.5 219.0 L878.5 430.0" stroke="#00ffff" fill="none"/>
<path d="M881.0 219.0 L881.0 430.0" stroke="#00ffff" fill="none"/>
<path d="M880.0 282.0 L890.5 277.6 L937.6 277.6 L937.6 299.7 L890.5 299.7 L880.0 305.0" stroke="#00ffff" fill="none"/>
<path d="M889.0 156.0 L893.0 172.0" stroke="#00ffff" fill="none"/>
<path d="M882.0 164.0 L890.0 167.0" stroke="#00ffff" fill="none"/>
<path d="M866.0 320.0 L861.3 323.3 L854.1 324.9 L845.8 323.0 L837.1 318.4 L829.3 311.9 L824.2 305.3 L821.3 299.8 L827.4 298.3 L835.6 297.8 L845.7 299.4 L854.9 302.9 L861.8 307.8 L865.4 314.3 Z" stroke="#00ffff" fill="none"/>
<path d="M857.5 315.0 L848.1 311.9 L838.8 308.7 L827.5 304.0" stroke="#ff0000" fill="none"/>
<path d="M866.0 320.0 L878.5 326.0" stroke="#00ffff" fill="none"/>
<path d="M865.1 321.8 L877.6 327.8" stroke="#00ffff" fill="none"/>
<path d="M892.0 343.0 L892.7 337.2 L896.4 330.7 L903.5 325.6 L912.9 321.8 L923.3 320.1 L931.8 320.4 L938.0 321.8 L935.0 327.4 L929.7 334.1 L921.7 340.8 L912.7 345.6 L904.2 347.7 L896.8 346.2 Z" stroke="#00ffff" fill="none"/>
<path d="M901.7 339.8 L910.4 334.5 L919.2 329.5 L930.5 323.8" stroke="#ff0000" fill="none"/>
<path d="M892.0 343.0 L881.0 349.0" stroke="#00ffff" fill="none"/>
<path d="M891.0 341.2 L880.0 347.2" stroke="#00ffff" fill="none"/>
<path d="M866.0 365.0 L861.2 368.2 L854.0 369.8 L845.7 367.7 L837.0 363.1 L829.2 356.5 L824.2 349.9 L821.3 344.3 L827.4 342.9 L835.7 342.5 L845.8 344.1 L855.0 347.8 L861.9 352.8 L865.4 359.3 Z" stroke="#00ffff" fill="none"/>
<path d="M857.5 359.9 L848.1 356.7 L838.8 353.4 L827.5 348.6" stroke="#ff0000" fill="none"/>
<path d="M866.0 365.0 L878.5 371.0" stroke="#00ffff" fill="none"/>
<path d="M865.1 366.8 L877.6 372.8" stroke="#00ffff" fill="none"/>
<path d="M892.0 389.0 L892.7 383.2 L896.3 376.7 L903.4 371.5 L912.9 367.7 L923.2 365.9 L931.8 366.2 L938.0 367.5 L935.0 373.1 L929.8 379.9 L921.7 386.6 L912.8 391.4 L904.2 393.6 L896.9 392.2 Z" stroke="#00ffff" fill="none"/>
<path d="M901.7 385.7 L910.4 380.4 L919.2 375.3 L930.5 369.5" stroke="#ff0000" fill="none"/>
<path d="M892.0 389.0 L881.0 395.0" stroke="#00ffff" fill="none"/>
<path d="M891.0 387.2 L880.0 393.2" stroke="#00ffff" fill="none"/>
<path d="M880.0 330.0 L883.8 338.2" stroke="#00ffff" fill="none"/>
<path d="M880.0 330.0 L876.2 338.2" stroke="#00ffff" fill="none"/>
<path d="M880.0 346.0 L876.2 337.8" stroke="#00ffff" fill="none"/>
<path d="M880.0 346.0 L883.8 337.8" stroke="#00ffff" fill="none"/>
<path d="M880.0 375.0 L883.8 383.2" stroke="#00ffff" fill="none"/>
<path d="M880.0 375.0 L876.2 383.2" stroke="#00ffff" fill="none"/>
<path d="M880.0 392.0 L876.2 383.8" stroke="#00ffff" fill="none"/>
<path d="M880.0 392.0 L883.8 383.8" stroke="#00ffff" fill="none"/>
<path d="M880.0 429.0 L876.3 417.6" stroke="#00ffff" fill="none"/>
<path d="M880.0 429.0 L883.7 417.6" stroke="#00ffff" fill="none"/>
<circle cx="879.4" cy="461.3" r="44.3" stroke="#00ffff" fill="none"/>
<circle cx="879.3" cy="460.9" r="19.2" stroke="#00ffff" fill="none"/>
<path d="M879.0 505.6 L887.8 500.9" stroke="#00ffff" fill="none"/>
<path d="M879.0 505.6 L887.8 510.3" stroke="#00ffff" fill="none"/>
<circle cx="897.5" cy="197.5" r="3.6" fill="#fff" stroke="none"/>
<path d="M268.9 637.3 L261.9 639.6 L256.5 638.7 L252.0 633.3 L248.0 624.0 L247.6 619.6 L242.5 616.8 L254.4 614.6 L254.9 613.1 L256.4 613.4 L264.3 604.2 L264.2 610.0 L267.8 612.6 L273.8 620.7 L276.3 627.3 L274.4 632.4 Z" stroke="#00ffff" fill="none"/>
<path d="M266.9 633.9 L260.7 636.3 L256.8 635.1 L253.1 629.2 L250.1 621.6 L247.1 617.6 L256.4 615.7 L262.7 608.6 L264.7 613.2 L269.7 619.6 L273.0 625.7 L272.1 629.7 Z" stroke="#ff0000" fill="none"/>
<path d="M264.4 629.6 L256.4 615.7" stroke="#ff0000" fill="none"/>
<path d="M273.5 648.5 L267.0 637.3" stroke="#00ffff" fill="none"/>
<path d="M276.3 646.9 L269.8 635.7" stroke="#00ffff" fill="none"/>
<path d="M287.9 637.3 L282.4 632.4 L280.5 627.3 L283.0 620.7 L289.0 612.6 L292.6 610.0 L292.5 604.2 L300.4 613.4 L301.9 613.1 L302.4 614.6 L314.3 616.8 L309.2 619.6 L308.8 624.0 L304.8 633.3 L300.3 638.7 L294.9 639.6 Z" stroke="#00ffff" fill="none"/>
<path d="M289.9 633.9 L284.7 629.7 L283.8 625.7 L287.1 619.6 L292.1 613.2 L294.1 608.6 L300.4 615.7 L309.7 617.6 L306.7 621.6 L303.7 629.2 L300.0 635.1 L296.1 636.3 Z" stroke="#ff0000" fill="none"/>
<path d="M292.4 629.6 L300.4 615.7" stroke="#ff0000" fill="none"/>
<path d="M280.5 646.9 L287.0 635.7" stroke="#00ffff" fill="none"/>
<path d="M283.3 648.5 L289.8 637.3" stroke="#00ffff" fill="none"/>
<path d="M297.4 653.8 L298.9 646.6 L302.4 642.4 L309.4 641.2 L319.4 642.4 L323.4 644.2 L328.4 641.2 L324.4 652.6 L325.4 653.8 L324.4 655.0 L328.4 666.4 L323.4 663.4 L319.4 665.2 L309.4 666.4 L302.4 665.2 L298.9 661.0 Z" stroke="#00ffff" fill="none"/>
<path d="M301.4 653.8 L302.4 647.2 L305.4 644.4 L312.4 644.2 L320.4 645.4 L325.4 644.8 L322.4 653.8 L325.4 662.8 L320.4 662.2 L312.4 663.4 L305.4 663.2 L302.4 660.4 Z" stroke="#ff0000" fill="none"/>
<path d="M306.4 653.8 L322.4 653.8" stroke="#ff0000" fill="none"/>
<path d="M285.4 652.2 L298.4 652.2" stroke="#00ffff" fill="none"/>
<path d="M285.4 655.4 L298.4 655.4" stroke="#00ffff" fill="none"/>
<path d="M287.9 670.3 L294.9 668.0 L300.3 668.9 L304.8 674.3 L308.8 683.6 L309.2 688.0 L314.3 690.8 L302.4 693.0 L301.9 694.5 L300.4 694.2 L292.5 703.4 L292.6 697.6 L289.0 695.0 L283.0 686.9 L280.5 680.3 L282.4 675.2 Z" stroke="#00ffff" fill="none"/>
<path d="M289.9 673.7 L296.1 671.3 L300.0 672.5 L303.7 678.4 L306.7 686.0 L309.7 690.0 L300.4 691.9 L294.1 699.0 L292.1 694.4 L287.1 688.0 L283.8 681.9 L284.7 677.9 Z" stroke="#ff0000" fill="none"/>
<path d="M292.4 678.0 L300.4 691.9" stroke="#ff0000" fill="none"/>
<path d="M283.3 659.1 L289.8 670.3" stroke="#00ffff" fill="none"/>
<path d="M280.5 660.7 L287.0 671.9" stroke="#00ffff" fill="none"/>
<path d="M268.9 670.3 L274.4 675.2 L276.3 680.3 L273.8 686.9 L267.8 695.0 L264.2 697.6 L264.3 703.4 L256.4 694.2 L254.9 694.5 L254.4 693.0 L242.5 690.8 L247.6 688.0 L248.0 683.6 L252.0 674.3 L256.5 668.9 L261.9 668.0 Z" stroke="#00ffff" fill="none"/>
<path d="M266.9 673.7 L272.1 677.9 L273.0 681.9 L269.7 688.0 L264.7 694.4 L262.7 699.0 L256.4 691.9 L247.1 690.0 L250.1 686.0 L253.1 678.4 L256.8 672.5 L260.7 671.3 Z" stroke="#ff0000" fill="none"/>
<path d="M264.4 678.0 L256.4 691.9" stroke="#ff0000" fill="none"/>
<path d="M276.3 660.7 L269.8 671.9" stroke="#00ffff" fill="none"/>
<path d="M273.5 659.1 L267.0 670.3" stroke="#00ffff" fill="none"/>
<path d="M259.4 653.8 L257.9 661.0 L254.4 665.2 L247.4 666.4 L237.4 665.2 L233.4 663.4 L228.4 666.4 L232.4 655.0 L231.4 653.8 L232.4 652.6 L228.4 641.2 L233.4 644.2 L237.4 642.4 L247.4 641.2 L254.4 642.4 L257.9 646.6 Z" stroke="#00ffff" fill="none"/>
<path d="M255.4 653.8 L254.4 660.4 L251.4 663.2 L244.4 663.4 L236.4 662.2 L231.4 662.8 L234.4 653.8 L231.4 644.8 L236.4 645.4 L244.4 644.2 L251.4 644.4 L254.4 647.2 Z" stroke="#ff0000" fill="none"/>
<path d="M250.4 653.8 L234.4 653.8" stroke="#ff0000" fill="none"/>
<path d="M271.4 655.4 L258.4 655.4" stroke="#00ffff" fill="none"/>
<path d="M271.4 652.2 L258.4 652.2" stroke="#00ffff" fill="none"/>
<path d="M269.2 653.7 L240.3 631.8 L273.7 645.9" stroke="#00ffff" fill="none"/>
<path d="M273.9 645.8 L278.4 609.8 L282.9 645.8" stroke="#00ffff" fill="none"/>
<path d="M283.1 645.9 L316.5 631.8 L287.6 653.7" stroke="#00ffff" fill="none"/>
<path d="M287.6 653.9 L316.5 675.8 L283.1 661.7" stroke="#00ffff" fill="none"/>
<path d="M282.9 661.8 L278.4 697.8 L273.9 661.8" stroke="#00ffff" fill="none"/>
<path d="M273.7 661.7 L240.3 675.8 L269.2 653.9" stroke="#00ffff" fill="none"/>
<path d="M272.4 650.8 L275.4 648.3 L281.4 648.3 L284.4 650.8 L284.4 656.8 L281.4 659.3 L275.4 659.3 L272.4 656.8 Z" stroke="#00ffff" fill="none"/>
<path d="M277.0 660.0 L277.0 922.0" stroke="#00ffff" fill="none"/>
<path d="M280.0 660.0 L280.0 922.0" stroke="#00ffff" fill="none"/>
<path d="M224.0 634.0 L238.0 646.0" stroke="#00ffff" fill="none"/>
<path d="M320.0 656.0 L341.0 652.0" stroke="#00ffff" fill="none"/>
<path d="M333.0 650.0 L336.0 664.0" stroke="#00ffff" fill="none"/>
<path d="M290.0 715.0 L290.1 708.0 L293.3 700.4 L300.2 695.0 L309.6 691.5 L320.2 690.5 L329.1 691.9 L335.7 694.3 L333.2 700.8 L328.3 708.4 L320.6 715.7 L311.8 720.5 L303.1 722.1 L295.3 719.5 Z" stroke="#00ffff" fill="none"/>
<path d="M299.7 712.1 L308.3 706.7 L317.0 701.6 L328.2 695.9" stroke="#ff0000" fill="none"/>
<path d="M290.0 715.0 L280.0 727.0" stroke="#00ffff" fill="none"/>
<path d="M288.5 713.7 L278.5 725.7" stroke="#00ffff" fill="none"/>
<path d="M265.0 738.0 L259.6 742.4 L251.7 744.8 L243.1 743.0 L234.3 738.1 L226.7 730.6 L222.0 722.9 L219.6 716.3 L226.3 714.0 L235.2 712.9 L245.8 714.1 L255.1 717.8 L262.0 723.4 L265.0 731.0 Z" stroke="#00ffff" fill="none"/>
<path d="M256.5 732.4 L246.8 729.3 L237.3 726.0 L225.7 721.1" stroke="#ff0000" fill="none"/>
<path d="M265.0 738.0 L277.0 745.0" stroke="#00ffff" fill="none"/>
<path d="M264.0 739.7 L276.0 746.7" stroke="#00ffff" fill="none"/>
<path d="M290.0 760.0 L290.6 753.8 L294.2 747.0 L301.3 742.0 L310.8 738.5 L321.2 737.3 L329.7 738.1 L336.0 740.0 L333.1 745.9 L327.8 752.7 L319.8 759.5 L310.9 764.0 L302.3 765.8 L294.9 763.8 Z" stroke="#00ffff" fill="none"/>
<path d="M299.7 757.1 L308.4 752.0 L317.2 747.1 L328.5 741.7" stroke="#ff0000" fill="none"/>
<path d="M290.0 760.0 L280.0 766.0" stroke="#00ffff" fill="none"/>
<path d="M289.0 758.3 L279.0 764.3" stroke="#00ffff" fill="none"/>
<path d="M265.0 785.0 L259.9 788.5 L252.4 790.2 L243.9 788.1 L235.1 783.2 L227.3 776.1 L222.3 769.0 L219.6 763.0 L226.0 761.4 L234.6 760.9 L245.0 762.6 L254.3 766.5 L261.3 771.9 L264.6 778.8 Z" stroke="#00ffff" fill="none"/>
<path d="M256.4 779.5 L246.8 776.2 L237.3 772.7 L225.8 767.6" stroke="#ff0000" fill="none"/>
<path d="M265.0 785.0 L277.0 790.0" stroke="#00ffff" fill="none"/>
<path d="M264.2 786.8 L276.2 791.8" stroke="#00ffff" fill="none"/>
<path d="M290.0 805.0 L290.7 798.9 L294.3 792.1 L301.4 787.2 L310.9 783.8 L321.2 782.7 L329.8 783.7 L336.0 785.6 L333.0 791.4 L327.8 798.2 L319.7 804.8 L310.8 809.3 L302.2 810.9 L294.9 808.8 Z" stroke="#00ffff" fill="none"/>
<path d="M299.7 802.2 L308.4 797.2 L317.2 792.5 L328.5 787.2" stroke="#ff0000" fill="none"/>
<path d="M290.0 805.0 L280.0 810.0" stroke="#00ffff" fill="none"/>
<path d="M289.1 803.2 L279.1 808.2" stroke="#00ffff" fill="none"/>
<path d="M278.0 763.0 L274.2 754.8" stroke="#00ffff" fill="none"/>
<path d="M278.0 763.0 L281.8 754.8" stroke="#00ffff" fill="none"/>
<path d="M278.0 806.0 L274.2 797.8" stroke="#00ffff" fill="none"/>
<path d="M278.0 806.0 L281.8 797.8" stroke="#00ffff" fill="none"/>
<path d="M278.0 848.0 L281.4 856.3" stroke="#00ffff" fill="none"/>
<path d="M278.0 848.0 L274.6 856.3" stroke="#00ffff" fill="none"/>
<path d="M278.0 920.0 L274.3 908.6" stroke="#00ffff" fill="none"/>
<path d="M278.0 920.0 L281.7 908.6" stroke="#00ffff" fill="none"/>
<circle cx="277.7" cy="951.9" r="44.2" stroke="#00ffff" fill="none"/>
<circle cx="277.7" cy="952.0" r="19.0" stroke="#00ffff" fill="none"/>
<path d="M277.0 996.0 L285.8 991.3" stroke="#00ffff" fill="none"/>
<path d="M277.0 996.0 L285.8 1000.7" stroke="#00ffff" fill="none"/>
<circle cx="299.0" cy="659.0" r="3.6" fill="#fff" stroke="none"/>
<path d="M535.0 644.0 L557.0 658.5 L557.0 661.5 L539.0 679.5 L517.0 666.5 L517.0 662.0 Z" stroke="#00ffff" fill="none"/>
<circle cx="537.0" cy="662.0" r="2.5" stroke="#00ffff" fill="none"/>
<path d="M534.0 673.0 L536.0 683.0" stroke="#00ffff" fill="none"/>
<path d="M531.0 681.0 L546.0 676.0" stroke="#00ffff" fill="none"/>
<path d="M540.0 676.0 L538.4 677.4 L536.1 679.2 L533.4 681.4 L530.6 684.0 L527.7 686.9 L525.0 690.0 L522.4 693.5 L519.8 697.3 L517.2 701.5 L514.6 705.9 L512.2 710.4 L510.0 715.0 L508.0 719.8 L506.0 724.8 L504.2 730.0 L502.6 735.2 L501.2 740.2 L500.0 745.0 L499.1 749.6 L498.4 754.3 L497.9 758.8 L497.5 763.0 L497.2 766.8 L497.0 770.0 L496.8 772.4 L496.8 773.9 L496.9 775.0 L497.0 776.1 L497.2 777.6 L497.3 780.0 L497.4 783.5 L497.5 787.8 L497.7 792.5 L497.8 797.3 L498.2 801.7 L498.6 805.4 L499.2 808.1 L499.8 810.1 L500.6 811.7 L501.5 813.3 L502.5 815.3 L503.7 818.0 L505.1 821.5 L506.6 825.6 L508.3 830.1 L510.1 834.7 L511.9 839.3 L513.8 843.5 L515.8 847.6 L518.0 851.6 L520.3 855.6 L522.5 859.4 L524.6 863.1 L526.5 866.4 L528.1 869.3 L529.6 871.9 L530.9 874.3 L532.1 876.6 L533.2 879.0 L534.1 881.6 L534.8 884.5 L535.2 887.5 L535.6 890.7 L535.8 893.7 L536.2 896.7 L536.7 899.4 L537.4 901.7 L538.3 903.7 L539.2 905.6 L540.1 907.5 L541.0 909.6 L541.8 912.1 L542.6 915.0 L543.3 918.1 L544.0 921.5 L544.7 925.0 L545.2 928.6 L545.6 932.4 L545.9 936.4 L546.0 940.7 L546.1 945.1 L546.0 949.5 L545.9 953.8 L545.6 957.8 L545.2 961.5 L544.7 965.0 L544.0 968.4 L543.3 971.7 L542.6 974.9 L541.8 978.1 L541.0 981.2 L540.2 984.2 L539.4 987.2 L538.5 990.1 L537.6 993.0 L536.7 995.9 L535.7 998.9 L534.7 1002.0 L533.7 1005.0 L532.6 1008.0 L531.5 1010.9 L530.3 1013.7 L528.9 1016.5 L527.4 1019.3 L525.8 1022.0 L524.2 1024.4 L522.9 1026.5 L522.0 1028.0" stroke="#00ffff" fill="none"/>
<path d="M538.6 674.3 L537.0 675.7 L534.7 677.5 L532.0 679.8 L529.0 682.4 L526.0 685.4 L523.2 688.7 L520.6 692.2 L518.0 696.2 L515.3 700.4 L512.7 704.9 L510.2 709.5 L508.0 714.1 L505.9 719.0 L504.0 724.1 L502.2 729.3 L500.5 734.6 L499.1 739.7 L497.8 744.6 L496.9 749.3 L496.2 754.0 L495.7 758.6 L495.3 762.8 L495.0 766.6 L494.8 769.9 L494.6 772.3 L494.6 774.0 L494.7 775.2 L494.8 776.3 L495.0 777.8 L495.1 780.1 L495.2 783.5 L495.3 787.9 L495.5 792.6 L495.7 797.5 L496.0 802.0 L496.4 805.9 L497.1 808.8 L497.8 811.0 L498.7 812.7 L499.5 814.3 L500.5 816.2 L501.6 818.8 L503.0 822.3 L504.5 826.4 L506.2 830.9 L508.0 835.5 L509.9 840.1 L511.8 844.5 L513.9 848.6 L516.1 852.7 L518.4 856.7 L520.6 860.5 L522.7 864.1 L524.6 867.5 L526.2 870.4 L527.7 873.0 L529.0 875.3 L530.1 877.5 L531.1 879.7 L532.0 882.1 L532.6 884.8 L533.1 887.7 L533.4 890.9 L533.6 894.0 L534.0 897.1 L534.6 900.1 L535.4 902.6 L536.3 904.7 L537.2 906.6 L538.1 908.3 L538.9 910.3 L539.7 912.7 L540.4 915.5 L541.2 918.6 L541.9 921.9 L542.5 925.3 L543.0 928.9 L543.4 932.5 L543.7 936.5 L543.8 940.7 L543.9 945.1 L543.8 949.4 L543.7 953.7 L543.4 957.6 L543.0 961.2 L542.5 964.6 L541.9 968.0 L541.2 971.2 L540.4 974.4 L539.7 977.6 L538.9 980.6 L538.1 983.6 L537.3 986.5 L536.4 989.4 L535.5 992.3 L534.6 995.2 L533.6 998.2 L532.6 1001.3 L531.6 1004.3 L530.6 1007.2 L529.5 1010.1 L528.3 1012.7 L527.0 1015.4 L525.5 1018.1 L523.9 1020.8 L522.4 1023.3 L521.0 1025.3 L520.1 1026.9" stroke="#00ffff" fill="none"/>
<path d="M500.0 752.0 L500.7 754.5 L501.6 758.0 L502.7 762.1 L504.0 766.5 L505.4 770.9 L507.0 775.0 L508.7 779.0 L510.6 783.1 L512.7 787.2 L514.9 791.1 L517.4 794.8 L520.0 798.0 L523.0 800.7 L526.3 803.0 L529.9 805.0 L533.4 806.8 L536.9 808.4 L540.0 810.0 L542.7 811.5 L545.0 812.9 L547.2 814.1 L549.5 815.1 L552.0 816.1 L555.0 817.0 L558.8 817.8 L563.2 818.4 L567.9 818.9 L572.4 819.4 L576.3 819.7 L579.0 820.0" stroke="#00ffff" fill="none"/>
<path d="M498.1 752.5 L498.8 755.0 L499.7 758.5 L500.8 762.6 L502.1 767.1 L503.5 771.6 L505.2 775.8 L506.9 779.8 L508.8 784.0 L510.9 788.2 L513.3 792.3 L515.8 796.1 L518.7 799.5 L521.9 802.3 L525.3 804.7 L529.0 806.8 L532.6 808.6 L536.0 810.2 L539.0 811.7 L541.7 813.2 L544.1 814.6 L546.4 815.9 L548.8 817.0 L551.5 818.0 L554.6 819.0 L558.5 819.7 L563.0 820.4 L567.7 820.9 L572.3 821.4 L576.1 821.7 L578.8 822.0" stroke="#00ffff" fill="none"/>
<path d="M534.0 881.6 L533.8 883.8 L533.5 886.9 L533.1 890.5 L532.7 894.5 L532.2 898.4 L531.6 902.0 L531.0 905.4 L530.3 908.7 L529.5 912.1 L528.7 915.5 L527.7 918.8 L526.5 922.2 L525.1 925.7 L523.5 929.3 L521.8 932.9 L520.0 936.4 L518.1 939.6 L516.4 942.6 L514.7 945.2 L513.1 947.6 L511.5 949.8 L509.8 951.7 L508.0 953.6 L506.2 955.3 L504.2 956.9 L502.2 958.3 L500.0 959.5 L497.8 960.7 L495.6 961.8 L493.5 962.9 L491.5 964.0 L489.5 965.2 L487.5 966.2 L485.5 967.3 L483.3 968.3 L480.8 969.2 L477.8 970.1 L474.3 971.1 L470.6 972.0 L467.1 972.8 L464.1 973.5 L462.0 974.0" stroke="#00ffff" fill="none"/>
<path d="M532.0 881.4 L531.8 883.6 L531.5 886.7 L531.1 890.3 L530.7 894.2 L530.2 898.1 L529.6 901.6 L529.0 905.0 L528.3 908.3 L527.6 911.6 L526.8 914.9 L525.8 918.2 L524.6 921.5 L523.3 924.9 L521.7 928.4 L520.0 931.9 L518.2 935.4 L516.4 938.6 L514.7 941.5 L513.1 944.1 L511.5 946.4 L509.9 948.5 L508.3 950.4 L506.7 952.1 L505.0 953.7 L503.1 955.2 L501.2 956.5 L499.1 957.7 L496.9 958.9 L494.7 960.0 L492.5 961.2 L490.5 962.3 L488.5 963.4 L486.6 964.4 L484.7 965.4 L482.6 966.4 L480.2 967.3 L477.3 968.2 L473.8 969.1 L470.2 970.0 L466.7 970.9 L463.7 971.5 L461.5 972.1" stroke="#00ffff" fill="none"/>
<path d="M521.4 856.2 L523.1 857.0 L525.4 858.2 L528.1 859.5 L531.0 861.0 L534.0 862.4 L536.7 863.8 L539.2 865.1 L541.6 866.5 L543.9 867.8 L546.4 869.1 L549.0 870.3 L551.9 871.4 L555.3 872.3 L559.3 873.1 L563.4 873.8 L567.3 874.4 L570.6 874.9 L573.0 875.3" stroke="#00ffff" fill="none"/>
<path d="M520.5 858.0 L522.2 858.8 L524.5 860.0 L527.2 861.3 L530.2 862.8 L533.1 864.2 L535.8 865.6 L538.2 866.8 L540.6 868.2 L543.0 869.6 L545.6 871.0 L548.3 872.2 L551.4 873.3 L554.9 874.3 L558.9 875.1 L563.1 875.8 L567.0 876.4 L570.3 876.9 L572.7 877.3" stroke="#00ffff" fill="none"/>
<path d="M498.6 823.0 L497.8 824.8 L496.7 827.2 L495.4 830.2 L494.0 833.2 L492.5 836.0 L491.0 838.4 L489.4 840.3 L487.5 842.1 L485.5 843.7 L483.7 845.0 L482.1 846.1 L481.0 847.0" stroke="#00ffff" fill="none"/>
<path d="M497.0 822.3 L496.2 824.0 L495.1 826.5 L493.8 829.4 L492.4 832.4 L491.0 835.1 L489.6 837.2 L488.1 839.0 L486.3 840.7 L484.5 842.2 L482.6 843.6 L481.0 844.7 L479.9 845.6" stroke="#00ffff" fill="none"/>
<path d="M504.0 700.6 L503.9 703.8 L502.3 707.3 L498.9 710.0 L494.3 711.8 L489.2 712.6 L484.9 712.2 L481.7 711.3 L483.0 708.3 L485.4 704.7 L489.2 701.1 L493.5 698.7 L497.7 697.7 L501.4 698.7 Z" stroke="#00ffff" fill="none"/>
<path d="M499.3 702.2 L495.1 704.9 L490.8 707.5 L485.4 710.4" stroke="#ff0000" fill="none"/>
<path d="M494.0 722.0 L493.6 725.1 L491.8 728.4 L488.4 730.7 L483.9 732.0 L478.9 732.1 L474.9 731.3 L471.9 730.0 L473.4 727.1 L475.9 723.9 L479.8 720.8 L484.1 718.9 L488.2 718.4 L491.7 719.8 Z" stroke="#00ffff" fill="none"/>
<path d="M489.4 723.0 L485.2 725.2 L480.9 727.3 L475.5 729.5" stroke="#ff0000" fill="none"/>
<path d="M519.0 691.7 L522.4 691.5 L526.5 693.1 L530.4 696.8 L533.7 701.9 L536.0 707.8 L537.0 712.8 L537.0 716.6 L533.4 715.4 L529.0 712.9 L524.1 708.9 L520.2 704.1 L517.9 699.3 L517.8 694.8 Z" stroke="#00ffff" fill="none"/>
<path d="M522.1 697.0 L526.2 701.7 L530.2 706.3 L534.9 712.4" stroke="#ff0000" fill="none"/>
<path d="M504.9 725.6 L508.2 725.9 L511.9 727.9 L514.9 731.9 L517.1 737.2 L518.1 743.1 L518.0 747.9 L517.3 751.4 L514.1 749.8 L510.3 746.8 L506.4 742.4 L503.6 737.3 L502.3 732.5 L503.1 728.4 Z" stroke="#00ffff" fill="none"/>
<path d="M506.8 731.0 L509.9 735.9 L512.8 740.9 L516.1 747.2" stroke="#ff0000" fill="none"/>
<path d="M512.0 767.5 L513.2 764.5 L515.9 761.7 L520.1 760.3 L525.1 760.1 L530.3 761.1 L534.3 762.9 L537.0 764.8 L534.7 767.2 L531.2 769.8 L526.4 771.9 L521.4 772.8 L517.1 772.3 L513.8 770.1 Z" stroke="#00ffff" fill="none"/>
<path d="M517.1 767.6 L522.0 766.4 L526.9 765.4 L533.2 764.5" stroke="#ff0000" fill="none"/>
<path d="M493.3 776.4 L493.4 779.7 L491.8 783.8 L488.1 787.5 L482.9 790.6 L477.0 792.7 L472.0 793.4 L468.3 793.3 L469.6 789.8 L472.1 785.5 L476.2 780.8 L481.0 777.1 L485.8 775.0 L490.2 775.1 Z" stroke="#00ffff" fill="none"/>
<path d="M487.9 779.3 L483.3 783.2 L478.6 787.0 L472.5 791.4" stroke="#ff0000" fill="none"/>
<path d="M544.0 805.8 L543.8 802.6 L545.1 798.9 L548.2 795.8 L552.7 793.4 L557.8 792.0 L562.2 791.9 L565.5 792.4 L564.5 795.6 L562.4 799.5 L559.0 803.5 L554.8 806.4 L550.7 807.9 L546.8 807.4 Z" stroke="#00ffff" fill="none"/>
<path d="M548.6 803.7 L552.6 800.4 L556.6 797.3 L561.9 793.8" stroke="#ff0000" fill="none"/>
<path d="M506.2 815.6 L508.9 813.9 L512.8 813.3 L516.9 814.7 L521.1 817.5 L524.6 821.4 L526.7 825.1 L527.8 828.3 L524.5 828.9 L520.2 828.9 L515.1 827.7 L510.6 825.4 L507.4 822.5 L506.1 818.8 Z" stroke="#00ffff" fill="none"/>
<path d="M510.2 818.7 L514.8 820.7 L519.4 822.8 L524.9 825.7" stroke="#ff0000" fill="none"/>
<path d="M534.1 815.6 L537.2 816.4 L540.2 818.5 L542.0 822.2 L542.7 826.8 L542.2 831.7 L540.8 835.6 L539.2 838.4 L536.6 836.6 L533.7 833.7 L531.1 829.4 L529.8 824.9 L529.8 820.9 L531.7 817.6 Z" stroke="#00ffff" fill="none"/>
<path d="M534.5 820.3 L536.1 824.7 L537.6 829.2 L539.2 834.8" stroke="#ff0000" fill="none"/>
<path d="M526.5 876.5 L528.2 879.2 L528.8 883.1 L527.4 887.2 L524.6 891.4 L520.7 894.9 L517.0 897.0 L513.8 898.1 L513.2 894.8 L513.2 890.5 L514.4 885.4 L516.7 880.9 L519.6 877.7 L523.3 876.4 Z" stroke="#00ffff" fill="none"/>
<path d="M523.4 880.5 L521.4 885.1 L519.3 889.7 L516.4 895.2" stroke="#ff0000" fill="none"/>
<path d="M529.0 917.0 L527.0 919.7 L523.1 921.9 L517.9 922.4 L511.8 921.6 L505.9 919.6 L501.5 917.0 L498.6 914.6 L501.8 912.7 L506.5 910.8 L512.7 909.8 L518.9 909.9 L523.9 911.3 L527.4 914.1 Z" stroke="#00ffff" fill="none"/>
<path d="M523.0 915.9 L516.8 916.0 L510.7 916.1 L503.1 915.7" stroke="#ff0000" fill="none"/>
<path d="M546.8 917.2 L549.9 916.1 L554.0 916.4 L558.0 918.7 L561.9 922.5 L565.0 927.3 L566.6 931.6 L567.2 935.0 L563.7 934.9 L559.2 933.8 L554.1 931.5 L549.8 928.1 L547.0 924.4 L546.2 920.4 Z" stroke="#00ffff" fill="none"/>
<path d="M550.5 921.2 L555.0 924.3 L559.4 927.5 L564.6 931.8" stroke="#ff0000" fill="none"/>
<path d="M541.8 932.4 L543.0 935.5 L542.8 939.8 L540.5 944.3 L536.7 948.6 L531.9 952.3 L527.5 954.4 L524.0 955.3 L524.1 951.7 L525.0 946.9 L527.3 941.4 L530.6 936.6 L534.4 933.3 L538.5 932.0 Z" stroke="#00ffff" fill="none"/>
<path d="M537.7 936.6 L534.7 941.6 L531.5 946.4 L527.3 952.3" stroke="#ff0000" fill="none"/>
<path d="M546.8 945.1 L550.2 945.0 L554.4 946.6 L558.1 950.4 L561.5 955.7 L563.7 961.6 L564.6 966.7 L564.6 970.5 L561.0 969.2 L556.6 966.7 L551.7 962.5 L547.9 957.6 L545.7 952.7 L545.6 948.2 Z" stroke="#00ffff" fill="none"/>
<path d="M549.8 950.5 L553.9 955.3 L557.9 960.1 L562.5 966.3" stroke="#ff0000" fill="none"/>
<path d="M539.2 970.5 L538.8 973.8 L536.8 977.4 L532.9 980.2 L527.7 982.2 L522.0 983.1 L517.2 982.8 L513.8 982.0 L515.4 978.9 L518.3 975.1 L522.8 971.4 L527.7 968.8 L532.4 967.7 L536.5 968.6 Z" stroke="#00ffff" fill="none"/>
<path d="M533.9 972.2 L529.0 975.1 L524.2 977.9 L517.9 981.0" stroke="#ff0000" fill="none"/>
<path d="M541.8 988.3 L545.0 988.2 L548.7 989.5 L551.6 992.7 L553.9 997.2 L555.1 1002.3 L555.1 1006.6 L554.5 1009.9 L551.3 1008.8 L547.6 1006.7 L543.7 1003.2 L540.9 999.0 L539.5 994.9 L540.1 991.0 Z" stroke="#00ffff" fill="none"/>
<path d="M543.8 992.9 L546.9 996.9 L549.9 1001.0 L553.2 1006.3" stroke="#ff0000" fill="none"/>
<path d="M493.5 955.3 L490.9 957.1 L487.2 957.9 L483.3 956.7 L479.4 954.1 L476.1 950.5 L474.2 946.9 L473.2 943.8 L476.3 943.0 L480.4 942.9 L485.3 943.8 L489.5 945.8 L492.5 948.6 L493.7 952.2 Z" stroke="#00ffff" fill="none"/>
<path d="M489.7 952.5 L485.4 950.7 L481.1 948.8 L475.9 946.2" stroke="#ff0000" fill="none"/>
<path d="M506.2 962.9 L508.7 965.0 L510.5 968.7 L510.6 973.4 L509.2 978.7 L506.7 983.7 L503.8 987.3 L501.1 989.6 L499.5 986.5 L498.1 982.1 L497.6 976.5 L498.3 971.1 L500.1 966.7 L503.1 964.0 Z" stroke="#00ffff" fill="none"/>
<path d="M504.6 968.1 L504.2 973.6 L503.6 979.0 L502.6 985.7" stroke="#ff0000" fill="none"/>
<path d="M470.9 843.3 L466.7 843.5 L459.3 836.0 L456.7 834.5 L461.0 832.7 L459.2 828.7 L463.4 830.0 L464.7 825.5 L466.5 828.0 L474.7 834.6 L474.9 838.8 Z" stroke="#00ffff" fill="none"/>
<path d="M469.8 841.5 L467.2 841.4 L460.0 834.4 L465.0 828.9 L472.7 835.3 L473.1 837.9 Z" stroke="#ff0000" fill="none"/>
<path d="M468.0 839.0 L461.7 833.3" stroke="#ff0000" fill="none"/>
<path d="M470.4 836.4 L464.1 830.7" stroke="#ff0000" fill="none"/>
<path d="M478.5 846.1 L472.9 841.0" stroke="#00ffff" fill="none"/>
<path d="M479.0 837.5 L476.7 833.9 L479.5 823.8 L479.5 820.7 L483.2 823.6 L485.8 820.0 L486.8 824.3 L491.3 823.2 L490.1 826.0 L488.5 836.4 L484.9 838.7 Z" stroke="#00ffff" fill="none"/>
<path d="M480.0 835.7 L478.8 833.3 L481.2 823.6 L488.5 825.2 L486.8 835.0 L484.7 836.7 Z" stroke="#ff0000" fill="none"/>
<path d="M481.3 832.8 L483.0 824.5" stroke="#ff0000" fill="none"/>
<path d="M484.8 833.6 L486.5 825.3" stroke="#ff0000" fill="none"/>
<path d="M480.4 845.4 L482.0 838.1" stroke="#00ffff" fill="none"/>
<path d="M488.1 841.6 L490.0 837.8 L500.2 835.2 L502.9 833.7 L502.3 838.3 L506.6 838.7 L503.4 841.7 L506.6 845.1 L503.5 845.4 L493.7 849.2 L490.0 847.3 Z" stroke="#00ffff" fill="none"/>
<path d="M490.2 841.6 L491.6 839.3 L501.2 836.6 L503.5 843.7 L494.1 847.1 L491.7 846.1 Z" stroke="#ff0000" fill="none"/>
<path d="M493.2 841.2 L501.3 838.6" stroke="#ff0000" fill="none"/>
<path d="M494.3 844.6 L502.4 842.0" stroke="#ff0000" fill="none"/>
<path d="M481.9 846.8 L489.0 844.5" stroke="#00ffff" fill="none"/>
<path d="M489.1 851.5 L493.3 851.3 L500.7 858.8 L503.3 860.3 L499.0 862.1 L500.8 866.1 L496.6 864.8 L495.3 869.3 L493.5 866.8 L485.3 860.2 L485.1 856.0 Z" stroke="#00ffff" fill="none"/>
<path d="M490.2 853.3 L492.8 853.4 L500.0 860.4 L495.0 865.9 L487.3 859.5 L486.9 856.9 Z" stroke="#ff0000" fill="none"/>
<path d="M492.0 855.8 L498.3 861.5" stroke="#ff0000" fill="none"/>
<path d="M489.6 858.4 L495.9 864.1" stroke="#ff0000" fill="none"/>
<path d="M481.5 848.7 L487.1 853.8" stroke="#00ffff" fill="none"/>
<path d="M481.0 857.3 L483.3 860.9 L480.5 871.0 L480.5 874.1 L476.8 871.2 L474.2 874.8 L473.2 870.5 L468.7 871.6 L469.9 868.8 L471.5 858.4 L475.1 856.1 Z" stroke="#00ffff" fill="none"/>
<path d="M480.0 859.1 L481.2 861.5 L478.8 871.2 L471.5 869.6 L473.2 859.8 L475.3 858.1 Z" stroke="#ff0000" fill="none"/>
<path d="M478.7 862.0 L477.0 870.3" stroke="#ff0000" fill="none"/>
<path d="M475.2 861.2 L473.5 869.5" stroke="#ff0000" fill="none"/>
<path d="M479.6 849.4 L478.0 856.7" stroke="#00ffff" fill="none"/>
<path d="M471.9 853.2 L470.0 857.0 L459.8 859.6 L457.1 861.1 L457.7 856.5 L453.4 856.1 L456.6 853.1 L453.4 849.7 L456.5 849.4 L466.3 845.6 L470.0 847.5 Z" stroke="#00ffff" fill="none"/>
<path d="M469.8 853.2 L468.4 855.5 L458.8 858.2 L456.5 851.1 L465.9 847.7 L468.3 848.7 Z" stroke="#ff0000" fill="none"/>
<path d="M466.8 853.6 L458.7 856.2" stroke="#ff0000" fill="none"/>
<path d="M465.7 850.2 L457.6 852.8" stroke="#ff0000" fill="none"/>
<path d="M478.1 848.0 L471.0 850.3" stroke="#00ffff" fill="none"/>
<path d="M477.5 845.9 L480.0 844.4 L482.5 845.9 L482.5 848.9 L480.0 850.4 L477.5 848.9 Z" stroke="#00ffff" fill="none"/>
<path d="M572.6 812.7 L568.4 812.3 L562.1 803.9 L559.7 801.9 L564.2 800.8 L563.0 796.6 L567.0 798.5 L568.9 794.2 L570.4 796.9 L577.6 804.6 L577.2 808.8 Z" stroke="#00ffff" fill="none"/>
<path d="M571.8 810.7 L569.2 810.3 L563.0 802.4 L568.7 797.6 L575.4 805.0 L575.4 807.6 Z" stroke="#ff0000" fill="none"/>
<path d="M570.3 808.0 L564.8 801.5" stroke="#ff0000" fill="none"/>
<path d="M573.1 805.7 L567.6 799.2" stroke="#ff0000" fill="none"/>
<path d="M579.7 816.5 L574.9 810.7" stroke="#00ffff" fill="none"/>
<path d="M581.4 808.0 L579.6 804.2 L583.8 794.5 L584.3 791.5 L587.5 794.8 L590.6 791.7 L590.9 796.1 L595.5 795.6 L593.9 798.2 L590.9 808.3 L587.1 810.1 Z" stroke="#00ffff" fill="none"/>
<path d="M582.7 806.4 L581.8 803.9 L585.5 794.6 L592.5 797.2 L589.5 806.7 L587.2 808.0 Z" stroke="#ff0000" fill="none"/>
<path d="M584.3 803.8 L587.2 795.8" stroke="#ff0000" fill="none"/>
<path d="M587.7 805.0 L590.6 797.0" stroke="#ff0000" fill="none"/>
<path d="M581.7 816.1 L584.2 809.1" stroke="#00ffff" fill="none"/>
<path d="M589.8 813.4 L592.3 809.9 L602.7 808.7 L605.6 807.6 L604.3 812.1 L608.6 813.1 L604.9 815.6 L607.6 819.4 L604.6 819.3 L594.4 821.7 L590.9 819.3 Z" stroke="#00ffff" fill="none"/>
<path d="M591.9 813.6 L593.6 811.6 L603.5 810.3 L604.8 817.6 L595.0 819.7 L592.7 818.4 Z" stroke="#ff0000" fill="none"/>
<path d="M595.0 813.7 L603.3 812.2" stroke="#ff0000" fill="none"/>
<path d="M595.6 817.3 L604.0 815.8" stroke="#ff0000" fill="none"/>
<path d="M583.0 817.7 L590.4 816.4" stroke="#00ffff" fill="none"/>
<path d="M589.4 823.3 L593.6 823.7 L599.9 832.1 L602.3 834.1 L597.8 835.2 L599.0 839.4 L595.0 837.5 L593.1 841.8 L591.6 839.1 L584.4 831.4 L584.8 827.2 Z" stroke="#00ffff" fill="none"/>
<path d="M590.2 825.3 L592.8 825.7 L599.0 833.6 L593.3 838.4 L586.6 831.0 L586.6 828.4 Z" stroke="#ff0000" fill="none"/>
<path d="M591.7 828.0 L597.2 834.5" stroke="#ff0000" fill="none"/>
<path d="M588.9 830.3 L594.4 836.8" stroke="#ff0000" fill="none"/>
<path d="M582.3 819.5 L587.1 825.3" stroke="#00ffff" fill="none"/>
<path d="M580.6 828.0 L582.4 831.8 L578.2 841.5 L577.7 844.5 L574.5 841.2 L571.4 844.3 L571.1 839.9 L566.5 840.4 L568.1 837.8 L571.1 827.7 L574.9 825.9 Z" stroke="#00ffff" fill="none"/>
<path d="M579.3 829.6 L580.2 832.1 L576.5 841.4 L569.5 838.8 L572.5 829.3 L574.8 828.0 Z" stroke="#ff0000" fill="none"/>
<path d="M577.7 832.2 L574.8 840.2" stroke="#ff0000" fill="none"/>
<path d="M574.3 831.0 L571.4 839.0" stroke="#ff0000" fill="none"/>
<path d="M580.3 819.9 L577.8 826.9" stroke="#00ffff" fill="none"/>
<path d="M572.2 822.6 L569.7 826.1 L559.3 827.3 L556.4 828.4 L557.7 823.9 L553.4 822.9 L557.1 820.4 L554.4 816.6 L557.4 816.7 L567.6 814.3 L571.1 816.7 Z" stroke="#00ffff" fill="none"/>
<path d="M570.1 822.4 L568.4 824.4 L558.5 825.7 L557.2 818.4 L567.0 816.3 L569.3 817.6 Z" stroke="#ff0000" fill="none"/>
<path d="M567.0 822.3 L558.7 823.8" stroke="#ff0000" fill="none"/>
<path d="M566.4 818.7 L558.0 820.2" stroke="#ff0000" fill="none"/>
<path d="M579.0 818.3 L571.6 819.6" stroke="#00ffff" fill="none"/>
<path d="M578.5 816.5 L581.0 815.0 L583.5 816.5 L583.5 819.5 L581.0 821.0 L578.5 819.5 Z" stroke="#00ffff" fill="none"/>
<path d="M565.3 872.3 L561.1 873.0 L552.9 866.5 L550.1 865.3 L554.1 863.0 L551.9 859.2 L556.2 860.1 L556.9 855.5 L559.1 857.7 L568.0 863.2 L568.7 867.4 Z" stroke="#00ffff" fill="none"/>
<path d="M564.0 870.7 L561.4 870.9 L553.4 864.9 L557.7 858.8 L566.1 864.2 L566.8 866.7 Z" stroke="#ff0000" fill="none"/>
<path d="M561.9 868.5 L554.9 863.6" stroke="#ff0000" fill="none"/>
<path d="M564.0 865.5 L557.0 860.6" stroke="#ff0000" fill="none"/>
<path d="M573.2 874.2 L567.0 869.9" stroke="#00ffff" fill="none"/>
<path d="M572.6 865.6 L569.9 862.3 L571.4 851.9 L571.1 848.9 L575.1 851.2 L577.2 847.4 L578.7 851.5 L583.0 849.9 L582.2 852.9 L581.9 863.4 L578.6 866.1 Z" stroke="#00ffff" fill="none"/>
<path d="M573.4 863.6 L571.9 861.5 L573.1 851.6 L580.6 852.2 L580.0 862.2 L578.2 864.1 Z" stroke="#ff0000" fill="none"/>
<path d="M574.3 860.7 L575.0 852.2" stroke="#ff0000" fill="none"/>
<path d="M577.9 861.0 L578.6 852.5" stroke="#ff0000" fill="none"/>
<path d="M575.0 873.3 L575.6 865.8" stroke="#00ffff" fill="none"/>
<path d="M582.1 868.6 L583.6 864.6 L593.4 860.7 L595.8 858.9 L595.8 863.5 L600.2 863.5 L597.3 866.8 L600.9 869.7 L597.9 870.5 L588.7 875.5 L584.7 874.0 Z" stroke="#00ffff" fill="none"/>
<path d="M584.2 868.3 L585.3 865.9 L594.5 862.0 L597.7 868.7 L588.8 873.3 L586.2 872.6 Z" stroke="#ff0000" fill="none"/>
<path d="M587.2 867.5 L594.9 863.9" stroke="#ff0000" fill="none"/>
<path d="M588.7 870.8 L596.4 867.2" stroke="#ff0000" fill="none"/>
<path d="M576.6 874.5 L583.4 871.3" stroke="#00ffff" fill="none"/>
<path d="M584.3 878.3 L588.5 877.6 L596.7 884.1 L599.5 885.3 L595.5 887.6 L597.7 891.4 L593.4 890.5 L592.7 895.1 L590.5 892.9 L581.6 887.4 L580.9 883.2 Z" stroke="#00ffff" fill="none"/>
<path d="M585.6 879.9 L588.2 879.7 L596.2 885.7 L591.9 891.8 L583.5 886.4 L582.8 883.9 Z" stroke="#ff0000" fill="none"/>
<path d="M587.7 882.1 L594.7 887.0" stroke="#ff0000" fill="none"/>
<path d="M585.6 885.1 L592.6 890.0" stroke="#ff0000" fill="none"/>
<path d="M576.4 876.4 L582.6 880.7" stroke="#00ffff" fill="none"/>
<path d="M577.0 885.0 L579.7 888.3 L578.2 898.7 L578.5 901.7 L574.5 899.4 L572.4 903.2 L570.9 899.1 L566.6 900.7 L567.4 897.7 L567.7 887.2 L571.0 884.5 Z" stroke="#00ffff" fill="none"/>
<path d="M576.2 887.0 L577.7 889.1 L576.5 899.0 L569.0 898.4 L569.6 888.4 L571.4 886.5 Z" stroke="#ff0000" fill="none"/>
<path d="M575.3 889.9 L574.6 898.4" stroke="#ff0000" fill="none"/>
<path d="M571.7 889.6 L571.0 898.1" stroke="#ff0000" fill="none"/>
<path d="M574.6 877.3 L574.0 884.8" stroke="#00ffff" fill="none"/>
<path d="M567.5 882.0 L566.0 886.0 L556.2 889.9 L553.8 891.7 L553.8 887.1 L549.4 887.1 L552.3 883.8 L548.7 880.9 L551.7 880.1 L560.9 875.1 L564.9 876.6 Z" stroke="#00ffff" fill="none"/>
<path d="M565.4 882.3 L564.3 884.7 L555.1 888.6 L551.9 881.9 L560.8 877.3 L563.4 878.0 Z" stroke="#ff0000" fill="none"/>
<path d="M562.4 883.1 L554.7 886.7" stroke="#ff0000" fill="none"/>
<path d="M560.9 879.8 L553.2 883.4" stroke="#ff0000" fill="none"/>
<path d="M573.0 876.1 L566.2 879.3" stroke="#00ffff" fill="none"/>
<path d="M572.3 873.8 L574.8 872.3 L577.3 873.8 L577.3 876.8 L574.8 878.3 L572.3 876.8 Z" stroke="#00ffff" fill="none"/>
<path d="M455.9 965.5 L452.4 963.0 L451.2 952.6 L450.1 949.7 L454.6 951.0 L455.6 946.7 L458.1 950.4 L461.9 947.7 L461.8 950.7 L464.2 960.9 L461.8 964.4 Z" stroke="#00ffff" fill="none"/>
<path d="M456.1 963.4 L454.1 961.7 L452.8 951.8 L460.1 950.5 L462.2 960.3 L460.9 962.6 Z" stroke="#ff0000" fill="none"/>
<path d="M456.2 960.3 L454.7 952.0" stroke="#ff0000" fill="none"/>
<path d="M459.8 959.7 L458.3 951.3" stroke="#ff0000" fill="none"/>
<path d="M460.2 972.3 L458.9 964.9" stroke="#00ffff" fill="none"/>
<path d="M465.8 965.9 L466.2 961.7 L474.6 955.4 L476.6 953.0 L477.7 957.5 L481.9 956.3 L480.0 960.3 L484.3 962.2 L481.6 963.7 L473.9 970.9 L469.7 970.5 Z" stroke="#00ffff" fill="none"/>
<path d="M467.8 965.1 L468.2 962.5 L476.1 956.3 L480.9 962.0 L473.5 968.7 L470.9 968.7 Z" stroke="#ff0000" fill="none"/>
<path d="M470.5 963.6 L477.0 958.1" stroke="#ff0000" fill="none"/>
<path d="M472.8 966.4 L479.3 960.9" stroke="#ff0000" fill="none"/>
<path d="M462.0 973.0 L467.8 968.2" stroke="#00ffff" fill="none"/>
<path d="M470.5 974.7 L474.3 972.9 L484.0 977.1 L487.0 977.6 L483.7 980.8 L486.8 983.9 L482.4 984.2 L482.9 988.8 L480.3 987.2 L470.2 984.2 L468.4 980.4 Z" stroke="#00ffff" fill="none"/>
<path d="M472.1 976.0 L474.6 975.1 L483.9 978.8 L481.3 985.8 L471.8 982.8 L470.5 980.5 Z" stroke="#ff0000" fill="none"/>
<path d="M474.7 977.6 L482.7 980.5" stroke="#ff0000" fill="none"/>
<path d="M473.5 981.0 L481.5 983.9" stroke="#ff0000" fill="none"/>
<path d="M462.4 975.0 L469.4 977.5" stroke="#00ffff" fill="none"/>
<path d="M465.1 983.1 L468.6 985.6 L469.8 996.0 L470.9 998.9 L466.4 997.6 L465.4 1001.9 L462.9 998.2 L459.1 1000.9 L459.2 997.9 L456.8 987.7 L459.2 984.2 Z" stroke="#00ffff" fill="none"/>
<path d="M464.9 985.2 L466.9 986.9 L468.2 996.8 L460.9 998.1 L458.8 988.3 L460.1 986.0 Z" stroke="#ff0000" fill="none"/>
<path d="M464.8 988.3 L466.3 996.6" stroke="#ff0000" fill="none"/>
<path d="M461.2 988.9 L462.7 997.3" stroke="#ff0000" fill="none"/>
<path d="M460.8 976.3 L462.1 983.7" stroke="#00ffff" fill="none"/>
<path d="M455.2 982.7 L454.8 986.9 L446.4 993.2 L444.4 995.6 L443.3 991.1 L439.1 992.3 L441.0 988.3 L436.7 986.4 L439.4 984.9 L447.1 977.7 L451.3 978.1 Z" stroke="#00ffff" fill="none"/>
<path d="M453.2 983.5 L452.8 986.1 L444.9 992.3 L440.1 986.6 L447.5 979.9 L450.1 979.9 Z" stroke="#ff0000" fill="none"/>
<path d="M450.5 985.0 L444.0 990.5" stroke="#ff0000" fill="none"/>
<path d="M448.2 982.2 L441.7 987.7" stroke="#ff0000" fill="none"/>
<path d="M459.0 975.6 L453.2 980.4" stroke="#00ffff" fill="none"/>
<path d="M450.5 973.9 L446.7 975.7 L437.0 971.5 L434.0 971.0 L437.3 967.8 L434.2 964.7 L438.6 964.4 L438.1 959.8 L440.7 961.4 L450.8 964.4 L452.6 968.2 Z" stroke="#00ffff" fill="none"/>
<path d="M448.9 972.6 L446.4 973.5 L437.1 969.8 L439.7 962.8 L449.2 965.8 L450.5 968.1 Z" stroke="#ff0000" fill="none"/>
<path d="M446.3 971.0 L438.3 968.1" stroke="#ff0000" fill="none"/>
<path d="M447.5 967.6 L439.5 964.7" stroke="#ff0000" fill="none"/>
<path d="M458.6 973.6 L451.6 971.1" stroke="#00ffff" fill="none"/>
<path d="M458.0 972.8 L460.5 971.3 L463.0 972.8 L463.0 975.8 L460.5 977.3 L458.0 975.8 Z" stroke="#00ffff" fill="none"/>
<path d="M510.6 1027.7 L506.4 1028.7 L497.8 1022.6 L495.0 1021.5 L498.9 1019.0 L496.5 1015.4 L500.8 1016.0 L501.3 1011.3 L503.6 1013.4 L512.8 1018.5 L513.7 1022.6 Z" stroke="#00ffff" fill="none"/>
<path d="M509.2 1026.1 L506.6 1026.5 L498.3 1020.9 L502.2 1014.6 L510.9 1019.6 L511.7 1022.1 Z" stroke="#ff0000" fill="none"/>
<path d="M506.9 1024.0 L499.7 1019.5" stroke="#ff0000" fill="none"/>
<path d="M508.9 1021.0 L501.6 1016.5" stroke="#ff0000" fill="none"/>
<path d="M518.5 1029.1 L512.1 1025.2" stroke="#00ffff" fill="none"/>
<path d="M517.5 1020.6 L514.6 1017.5 L515.6 1007.0 L515.1 1004.0 L519.2 1006.2 L521.2 1002.2 L522.8 1006.3 L527.1 1004.4 L526.4 1007.4 L526.6 1017.9 L523.5 1020.8 Z" stroke="#00ffff" fill="none"/>
<path d="M518.2 1018.6 L516.6 1016.6 L517.3 1006.6 L524.7 1006.8 L524.7 1016.9 L523.0 1018.8 Z" stroke="#ff0000" fill="none"/>
<path d="M518.9 1015.6 L519.2 1007.2" stroke="#ff0000" fill="none"/>
<path d="M522.5 1015.8 L522.8 1007.3" stroke="#ff0000" fill="none"/>
<path d="M520.3 1028.2 L520.5 1020.7" stroke="#00ffff" fill="none"/>
<path d="M527.2 1023.1 L528.4 1019.0 L538.0 1014.6 L540.3 1012.7 L540.5 1017.3 L544.9 1017.1 L542.2 1020.5 L546.0 1023.3 L543.0 1024.2 L534.1 1029.6 L530.0 1028.4 Z" stroke="#00ffff" fill="none"/>
<path d="M529.2 1022.7 L530.2 1020.3 L539.2 1015.9 L542.7 1022.5 L534.0 1027.5 L531.5 1026.9 Z" stroke="#ff0000" fill="none"/>
<path d="M532.2 1021.8 L539.7 1017.8" stroke="#ff0000" fill="none"/>
<path d="M533.8 1025.0 L541.4 1021.0" stroke="#ff0000" fill="none"/>
<path d="M522.0 1029.3 L528.6 1025.7" stroke="#00ffff" fill="none"/>
<path d="M529.8 1032.7 L534.0 1031.7 L542.6 1037.8 L545.4 1038.9 L541.5 1041.4 L543.9 1045.0 L539.6 1044.4 L539.1 1049.1 L536.8 1047.0 L527.6 1041.9 L526.7 1037.8 Z" stroke="#00ffff" fill="none"/>
<path d="M531.2 1034.3 L533.8 1033.9 L542.1 1039.5 L538.2 1045.8 L529.5 1040.8 L528.7 1038.3 Z" stroke="#ff0000" fill="none"/>
<path d="M533.5 1036.4 L540.7 1040.9" stroke="#ff0000" fill="none"/>
<path d="M531.5 1039.4 L538.8 1043.9" stroke="#ff0000" fill="none"/>
<path d="M521.9 1031.3 L528.3 1035.2" stroke="#00ffff" fill="none"/>
<path d="M522.9 1039.8 L525.8 1042.9 L524.8 1053.4 L525.3 1056.4 L521.2 1054.2 L519.2 1058.2 L517.6 1054.1 L513.3 1056.0 L514.0 1053.0 L513.8 1042.5 L516.9 1039.6 Z" stroke="#00ffff" fill="none"/>
<path d="M522.2 1041.8 L523.8 1043.8 L523.1 1053.8 L515.7 1053.6 L515.7 1043.5 L517.4 1041.6 Z" stroke="#ff0000" fill="none"/>
<path d="M521.5 1044.8 L521.2 1053.2" stroke="#ff0000" fill="none"/>
<path d="M517.9 1044.6 L517.6 1053.1" stroke="#ff0000" fill="none"/>
<path d="M520.1 1032.2 L519.9 1039.7" stroke="#00ffff" fill="none"/>
<path d="M513.2 1037.3 L512.0 1041.4 L502.4 1045.8 L500.1 1047.7 L499.9 1043.1 L495.5 1043.3 L498.2 1039.9 L494.4 1037.1 L497.4 1036.2 L506.3 1030.8 L510.4 1032.0 Z" stroke="#00ffff" fill="none"/>
<path d="M511.2 1037.7 L510.2 1040.1 L501.2 1044.5 L497.7 1037.9 L506.4 1032.9 L508.9 1033.5 Z" stroke="#ff0000" fill="none"/>
<path d="M508.2 1038.6 L500.7 1042.6" stroke="#ff0000" fill="none"/>
<path d="M506.6 1035.4 L499.0 1039.4" stroke="#ff0000" fill="none"/>
<path d="M518.4 1031.1 L511.8 1034.7" stroke="#00ffff" fill="none"/>
<path d="M517.7 1028.7 L520.2 1027.2 L522.7 1028.7 L522.7 1031.7 L520.2 1033.2 L517.7 1031.7 Z" stroke="#00ffff" fill="none"/>
<circle cx="503.0" cy="818.0" r="3.6" fill="#fff" stroke="none"/>
<path d="M798.0 700.0 L801.3 700.9 L805.8 702.2 L811.2 703.7 L816.9 705.3 L822.6 706.9 L827.7 708.4 L832.4 709.9 L836.9 711.4 L841.4 713.0 L845.9 714.4 L850.3 715.7 L854.8 716.8 L859.3 717.6 L863.8 718.3 L868.3 718.8 L872.9 719.1 L877.4 719.3 L881.9 719.4 L886.4 719.3 L890.9 719.0 L895.3 718.5 L899.8 718.0 L904.4 717.4 L909.0 716.8 L913.6 716.3 L918.2 716.0 L922.9 715.5 L927.7 714.9 L932.6 714.0 L937.8 712.6 L943.4 710.6 L949.5 708.0 L955.7 705.0 L961.9 702.0 L967.6 699.1 L972.8 696.5 L977.2 694.2 L981.0 692.1 L984.5 690.1 L987.8 688.2 L991.2 686.4 L994.8 684.7 L998.6 683.1 L1002.5 681.5 L1006.5 680.0 L1010.5 678.7 L1014.5 677.4 L1018.6 676.2 L1022.7 675.1 L1026.9 674.1 L1031.2 673.2 L1035.5 672.4 L1039.7 671.7 L1044.0 671.1 L1048.2 670.7 L1052.5 670.4 L1056.7 670.2 L1060.9 670.1 L1065.2 670.1 L1069.4 670.3 L1073.6 670.6 L1077.9 671.0 L1082.1 671.5 L1086.3 672.1 L1090.6 672.8 L1094.8 673.7 L1099.1 674.7 L1103.3 675.7 L1107.6 676.9 L1111.9 678.2 L1116.1 679.6 L1120.2 681.3 L1124.5 683.4 L1129.1 685.9 L1133.6 688.6 L1137.8 691.2 L1141.3 693.4 L1143.9 694.9" stroke="#ff0000" fill="none"/>
<path d="M797.5 701.9 L800.7 702.8 L805.3 704.1 L810.6 705.6 L816.3 707.2 L822.0 708.8 L827.1 710.3 L831.7 711.8 L836.3 713.3 L840.8 714.9 L845.3 716.3 L849.9 717.7 L854.4 718.8 L859.0 719.6 L863.6 720.3 L868.2 720.8 L872.8 721.1 L877.4 721.3 L882.0 721.4 L886.5 721.3 L891.1 721.0 L895.6 720.5 L900.1 720.0 L904.6 719.4 L909.2 718.8 L913.8 718.3 L918.4 718.0 L923.2 717.5 L928.0 716.9 L933.1 715.9 L938.5 714.5 L944.2 712.4 L950.3 709.8 L956.6 706.8 L962.8 703.8 L968.5 700.9 L973.7 698.3 L978.2 696.0 L982.0 693.9 L985.5 691.9 L988.8 690.0 L992.0 688.2 L995.6 686.5 L999.4 684.9 L1003.2 683.4 L1007.1 681.9 L1011.1 680.6 L1015.1 679.3 L1019.1 678.1 L1023.2 677.0 L1027.4 676.0 L1031.6 675.1 L1035.8 674.3 L1040.0 673.6 L1044.2 673.1 L1048.4 672.7 L1052.6 672.4 L1056.7 672.2 L1060.9 672.1 L1065.1 672.1 L1069.3 672.3 L1073.4 672.6 L1077.6 673.0 L1081.8 673.5 L1086.0 674.1 L1090.2 674.8 L1094.4 675.7 L1098.6 676.6 L1102.8 677.6 L1107.0 678.8 L1111.2 680.1 L1115.3 681.5 L1119.3 683.1 L1123.6 685.1 L1128.1 687.6 L1132.6 690.3 L1136.8 692.8 L1140.3 695.1 L1142.9 696.6" stroke="#ff0000" fill="none"/>
<path d="M852.3 636.4 L852.9 638.1 L853.7 640.4 L854.6 643.1 L855.7 646.1 L856.9 649.3 L858.2 652.5 L859.6 655.9 L861.2 659.6 L862.8 663.5 L864.6 667.4 L866.5 671.2 L868.4 674.5 L870.4 677.5 L872.3 680.2 L874.4 682.7 L876.6 685.1 L879.1 687.4 L881.9 689.8 L885.1 692.2 L888.8 694.7 L892.6 697.1 L896.6 699.4 L900.4 701.5 L904.0 703.3 L907.3 704.9 L910.6 706.2 L913.7 707.3 L916.8 708.3 L919.7 709.2 L922.6 710.0 L925.5 710.7 L928.5 711.3 L931.4 711.7 L934.0 712.1 L936.2 712.4 L937.8 712.6" stroke="#ff0000" fill="none"/>
<path d="M850.4 637.1 L851.0 638.7 L851.8 641.0 L852.7 643.7 L853.8 646.8 L855.0 650.0 L856.4 653.3 L857.8 656.7 L859.3 660.4 L861.0 664.4 L862.8 668.3 L864.7 672.2 L866.7 675.6 L868.7 678.6 L870.8 681.4 L872.9 684.0 L875.3 686.5 L877.8 689.0 L880.7 691.4 L884.0 693.9 L887.7 696.4 L891.6 698.8 L895.6 701.1 L899.5 703.2 L903.2 705.1 L906.6 706.7 L909.9 708.1 L913.1 709.2 L916.2 710.2 L919.2 711.1 L922.1 711.9 L925.1 712.7 L928.2 713.2 L931.1 713.7 L933.7 714.1 L935.9 714.3 L937.5 714.6" stroke="#ff0000" fill="none"/>
<path d="M981.3 655.0 L982.7 656.5 L984.7 658.6 L987.1 661.0 L989.7 663.6 L992.3 665.9 L994.8 667.7 L997.3 669.0 L1000.0 670.0 L1002.7 670.8 L1005.4 671.5 L1007.8 672.1 L1010.0 672.8 L1011.9 673.5 L1013.7 674.2 L1015.2 674.8 L1016.6 675.4 L1017.7 675.8 L1018.6 676.2" stroke="#ff0000" fill="none"/>
<path d="M980.0 656.3 L981.4 657.7 L983.4 659.8 L985.8 662.3 L988.5 664.9 L991.2 667.3 L994.0 669.3 L996.7 670.7 L999.5 671.8 L1002.3 672.6 L1004.9 673.3 L1007.3 673.9 L1009.4 674.5 L1011.3 675.2 L1013.0 675.9 L1014.6 676.5 L1015.9 677.0 L1017.1 677.5 L1017.9 677.9" stroke="#ff0000" fill="none"/>
<path d="M1018.6 710.0 L1020.0 708.7 L1022.0 706.9 L1024.4 704.7 L1027.0 702.4 L1029.6 700.2 L1032.1 698.2 L1034.5 696.4 L1036.9 694.6 L1039.4 692.9 L1042.0 691.3 L1044.6 689.7 L1047.4 688.1 L1050.3 686.5 L1053.3 685.0 L1056.4 683.4 L1059.6 682.0 L1062.8 680.7 L1066.0 679.6 L1069.3 678.7 L1072.6 677.9 L1076.0 677.3 L1079.5 676.8 L1082.9 676.4 L1086.3 676.2 L1089.9 676.2 L1093.8 676.5 L1097.7 676.8 L1101.3 677.3 L1104.4 677.7 L1106.6 677.9" stroke="#ff0000" fill="none"/>
<path d="M1019.8 711.3 L1021.3 710.0 L1023.2 708.2 L1025.6 706.1 L1028.1 703.8 L1030.7 701.6 L1033.2 699.6 L1035.6 697.9 L1038.0 696.1 L1040.4 694.5 L1042.9 692.8 L1045.5 691.2 L1048.3 689.7 L1051.1 688.1 L1054.1 686.6 L1057.1 685.1 L1060.2 683.7 L1063.3 682.4 L1066.5 681.3 L1069.7 680.4 L1073.0 679.7 L1076.3 679.0 L1079.7 678.6 L1083.0 678.2 L1086.3 678.0 L1089.8 678.0 L1093.6 678.2 L1097.5 678.6 L1101.1 679.1 L1104.2 679.4 L1106.4 679.7" stroke="#ff0000" fill="none"/>
<path d="M1018.6 710.0 L1017.8 711.8 L1016.8 714.4 L1015.5 717.4 L1014.2 720.7 L1012.9 724.0 L1011.8 727.0 L1010.8 729.9 L1009.9 732.9 L1009.0 735.8 L1008.1 738.7 L1007.4 741.5 L1006.7 744.0 L1006.1 746.4 L1005.6 748.8 L1005.1 751.0 L1004.8 752.9 L1004.4 754.6 L1004.2 755.8" stroke="#ff0000" fill="none"/>
<path d="M1016.9 709.3 L1016.2 711.2 L1015.1 713.7 L1013.9 716.8 L1012.5 720.0 L1011.2 723.3 L1010.1 726.4 L1009.1 729.3 L1008.2 732.3 L1007.3 735.3 L1006.4 738.2 L1005.6 741.0 L1005.0 743.6 L1004.3 746.0 L1003.8 748.4 L1003.4 750.6 L1003.0 752.6 L1002.7 754.2 L1002.4 755.5" stroke="#ff0000" fill="none"/>
<path d="M967.8 698.2 L966.8 700.1 L965.5 702.7 L963.9 705.9 L962.2 709.2 L960.6 712.4 L959.3 715.2 L958.2 717.6 L957.3 719.8 L956.4 721.9 L955.6 724.0 L954.9 726.2 L954.2 728.7 L953.6 731.6 L953.1 735.0 L952.6 738.4 L952.3 741.7 L951.9 744.5 L951.7 746.5" stroke="#ff0000" fill="none"/>
<path d="M966.2 697.4 L965.2 699.3 L963.9 701.9 L962.3 705.0 L960.6 708.4 L959.0 711.6 L957.7 714.5 L956.6 716.9 L955.6 719.1 L954.7 721.3 L953.9 723.5 L953.1 725.8 L952.4 728.3 L951.8 731.3 L951.3 734.7 L950.8 738.2 L950.5 741.5 L950.2 744.3 L949.9 746.3" stroke="#ff0000" fill="none"/>
<path d="M870.0 674.5 L868.0 671.5 L867.2 667.0 L868.5 662.1 L871.6 657.0 L875.9 652.6 L880.1 649.8 L883.6 648.3 L884.4 652.0 L884.5 657.1 L883.4 663.2 L881.0 668.6 L877.7 672.5 L873.6 674.4 Z" stroke="#ff0000" fill="none"/>
<path d="M873.3 669.6 L875.4 664.0 L877.7 658.5 L880.8 651.8" stroke="#ff0000" fill="none"/>
<path d="M866.7 678.7 L864.7 681.7 L861.1 684.2 L856.3 684.8 L850.7 683.9 L845.3 681.7 L841.3 678.9 L838.7 676.2 L841.7 674.0 L846.1 671.9 L851.9 670.7 L857.5 670.9 L862.2 672.3 L865.3 675.4 Z" stroke="#ff0000" fill="none"/>
<path d="M861.2 677.5 L855.5 677.7 L849.9 677.8 L842.8 677.4" stroke="#ff0000" fill="none"/>
<path d="M859.0 716.8 L855.4 716.6 L851.2 714.6 L848.0 710.5 L845.6 704.9 L844.5 698.7 L844.7 693.6 L845.5 689.8 L849.0 691.4 L853.3 694.4 L857.5 699.0 L860.5 704.2 L861.9 709.3 L861.0 713.8 Z" stroke="#ff0000" fill="none"/>
<path d="M856.9 711.1 L853.6 706.0 L850.4 700.9 L846.8 694.2" stroke="#ff0000" fill="none"/>
<path d="M896.3 718.5 L892.8 719.3 L888.3 718.5 L884.2 715.4 L880.6 710.8 L878.0 705.3 L876.9 700.3 L876.8 696.5 L880.6 697.1 L885.3 698.7 L890.6 702.0 L894.7 706.2 L897.2 710.6 L897.5 715.1 Z" stroke="#ff0000" fill="none"/>
<path d="M892.9 713.6 L888.5 709.7 L884.2 705.7 L879.1 700.4" stroke="#ff0000" fill="none"/>
<path d="M910.7 701.6 L907.7 699.7 L905.1 696.2 L904.3 691.4 L905.0 685.9 L907.1 680.4 L909.8 676.3 L912.4 673.7 L914.7 676.6 L916.9 681.0 L918.3 686.7 L918.3 692.3 L916.9 696.9 L913.9 700.1 Z" stroke="#ff0000" fill="none"/>
<path d="M911.7 696.1 L911.4 690.4 L911.2 684.8 L911.3 677.8" stroke="#ff0000" fill="none"/>
<path d="M839.6 720.2 L839.6 723.7 L838.1 727.5 L834.6 730.4 L829.9 732.2 L824.5 732.9 L820.1 732.3 L816.7 731.2 L817.9 727.9 L820.3 724.0 L824.1 720.3 L828.6 717.7 L832.9 716.8 L836.9 718.0 Z" stroke="#ff0000" fill="none"/>
<path d="M834.7 721.8 L830.4 724.6 L826.1 727.3 L820.5 730.3" stroke="#ff0000" fill="none"/>
<path d="M876.8 723.6 L877.6 727.1 L876.8 731.4 L873.9 735.2 L869.5 738.5 L864.1 740.7 L859.4 741.5 L855.7 741.4 L856.2 737.7 L857.8 733.2 L860.9 728.3 L864.9 724.5 L869.2 722.3 L873.5 722.3 Z" stroke="#ff0000" fill="none"/>
<path d="M872.1 726.6 L868.4 730.7 L864.5 734.7 L859.4 739.4" stroke="#ff0000" fill="none"/>
<path d="M910.7 721.9 L911.9 725.2 L911.7 729.6 L909.4 733.8 L905.4 737.6 L900.4 740.5 L895.8 741.9 L892.1 742.3 L892.1 738.6 L893.1 733.9 L895.6 728.6 L899.0 724.3 L903.0 721.6 L907.3 721.0 Z" stroke="#ff0000" fill="none"/>
<path d="M906.5 725.5 L903.3 730.1 L900.0 734.5 L895.5 739.8" stroke="#ff0000" fill="none"/>
<path d="M953.0 701.6 L950.0 703.5 L945.8 704.3 L941.2 703.0 L936.7 700.0 L932.8 695.7 L930.5 691.6 L929.3 688.1 L932.9 687.3 L937.7 687.2 L943.3 688.4 L948.2 690.8 L951.7 694.0 L953.1 698.1 Z" stroke="#ff0000" fill="none"/>
<path d="M948.6 698.3 L943.5 696.2 L938.5 694.0 L932.4 690.9" stroke="#ff0000" fill="none"/>
<path d="M1049.9 667.7 L1046.3 668.0 L1042.1 666.8 L1038.5 663.3 L1035.5 658.4 L1033.8 652.7 L1033.4 647.7 L1033.8 644.0 L1037.4 645.0 L1041.9 647.2 L1046.5 650.9 L1050.1 655.5 L1051.9 660.1 L1051.5 664.5 Z" stroke="#ff0000" fill="none"/>
<path d="M1047.3 662.6 L1043.5 658.2 L1039.8 653.8 L1035.5 648.0" stroke="#ff0000" fill="none"/>
<path d="M1107.5 676.2 L1103.9 675.6 L1100.0 673.1 L1097.1 668.6 L1095.2 662.7 L1094.7 656.3 L1095.3 651.2 L1096.5 647.4 L1099.9 649.4 L1103.8 652.9 L1107.7 658.0 L1110.2 663.6 L1111.1 668.9 L1109.8 673.3 Z" stroke="#ff0000" fill="none"/>
<path d="M1106.0 670.2 L1103.1 664.7 L1100.4 659.1 L1097.4 652.0" stroke="#ff0000" fill="none"/>
<path d="M1127.0 681.3 L1123.4 681.0 L1119.4 679.0 L1116.5 675.0 L1114.4 669.6 L1113.6 663.6 L1114.1 658.6 L1115.1 655.0 L1118.5 656.6 L1122.5 659.6 L1126.5 664.1 L1129.2 669.2 L1130.3 674.1 L1129.2 678.4 Z" stroke="#ff0000" fill="none"/>
<path d="M1125.3 675.8 L1122.2 670.8 L1119.3 665.8 L1116.1 659.3" stroke="#ff0000" fill="none"/>
<path d="M1099.9 679.6 L1100.1 683.1 L1098.7 687.1 L1095.3 690.2 L1090.5 692.4 L1085.1 693.4 L1080.5 693.2 L1077.0 692.3 L1078.1 688.9 L1080.3 684.8 L1084.1 680.8 L1088.5 677.9 L1092.9 676.7 L1097.0 677.6 Z" stroke="#ff0000" fill="none"/>
<path d="M1095.0 681.5 L1090.7 684.7 L1086.4 687.7 L1080.8 691.1" stroke="#ff0000" fill="none"/>
<path d="M1132.0 696.5 L1132.5 700.0 L1131.6 704.2 L1128.4 707.8 L1123.8 710.7 L1118.4 712.5 L1113.6 713.0 L1110.0 712.6 L1110.8 709.0 L1112.6 704.6 L1116.0 700.0 L1120.2 696.5 L1124.5 694.6 L1128.8 694.9 Z" stroke="#ff0000" fill="none"/>
<path d="M1127.2 699.2 L1123.2 702.9 L1119.1 706.6 L1113.8 710.9" stroke="#ff0000" fill="none"/>
<path d="M1058.4 681.3 L1061.8 682.7 L1065.2 686.0 L1067.1 691.2 L1067.7 697.5 L1067.0 704.0 L1065.3 709.1 L1063.4 712.6 L1060.5 709.9 L1057.3 705.5 L1054.6 699.6 L1053.2 693.4 L1053.4 687.9 L1055.6 683.7 Z" stroke="#ff0000" fill="none"/>
<path d="M1058.7 687.7 L1060.4 693.8 L1062.0 700.0 L1063.5 707.8" stroke="#ff0000" fill="none"/>
<path d="M1015.2 710.0 L1014.0 713.3 L1011.1 716.5 L1006.6 718.2 L1001.1 718.5 L995.5 717.5 L991.1 715.6 L988.1 713.5 L990.5 710.7 L994.2 707.8 L999.4 705.3 L1004.8 704.3 L1009.6 704.7 L1013.2 707.1 Z" stroke="#ff0000" fill="none"/>
<path d="M1009.7 710.0 L1004.4 711.4 L999.0 712.7 L992.3 713.8" stroke="#ff0000" fill="none"/>
<path d="M1018.6 676.2 L1020.1 679.6 L1020.1 684.5 L1017.8 689.7 L1013.8 694.9 L1008.6 699.3 L1003.8 702.0 L999.9 703.3 L999.8 699.2 L1000.5 693.7 L1002.8 687.3 L1006.3 681.7 L1010.3 677.7 L1014.9 676.0 Z" stroke="#ff0000" fill="none"/>
<path d="M1014.3 681.2 L1011.1 687.0 L1007.8 692.8 L1003.4 699.7" stroke="#ff0000" fill="none"/>
<path d="M1020.3 715.2 L1023.9 715.1 L1028.1 716.7 L1031.6 720.5 L1034.4 725.8 L1035.9 731.7 L1036.1 736.8 L1035.5 740.6 L1031.9 739.3 L1027.5 736.8 L1023.0 732.6 L1019.6 727.7 L1017.9 722.8 L1018.5 718.3 Z" stroke="#ff0000" fill="none"/>
<path d="M1022.7 720.6 L1026.4 725.4 L1029.9 730.2 L1033.9 736.4" stroke="#ff0000" fill="none"/>
<path d="M790.6 688.5 L786.6 687.3 L781.6 677.5 L779.6 675.2 L784.1 674.9 L783.6 670.6 L787.1 673.2 L789.6 669.4 L790.6 672.3 L796.6 681.6 L795.6 685.6 Z" stroke="#ff0000" fill="none"/>
<path d="M790.1 686.5 L787.7 685.5 L782.8 676.3 L788.9 672.7 L794.5 681.6 L794.1 684.2 Z" stroke="#ff0000" fill="none"/>
<path d="M789.0 683.6 L784.5 675.8" stroke="#ff0000" fill="none"/>
<path d="M792.2 681.8 L787.7 674.0" stroke="#ff0000" fill="none"/>
<path d="M797.1 694.0 L793.1 687.0" stroke="#ff0000" fill="none"/>
<path d="M800.6 685.6 L799.6 681.6 L805.6 672.3 L806.6 669.4 L809.1 673.2 L812.6 670.6 L812.1 674.9 L816.6 675.2 L814.6 677.5 L809.6 687.3 L805.6 688.5 Z" stroke="#ff0000" fill="none"/>
<path d="M802.1 684.2 L801.7 681.6 L807.3 672.7 L813.4 676.3 L808.5 685.5 L806.1 686.5 Z" stroke="#ff0000" fill="none"/>
<path d="M804.0 681.8 L808.5 674.0" stroke="#ff0000" fill="none"/>
<path d="M807.2 683.6 L811.7 675.8" stroke="#ff0000" fill="none"/>
<path d="M799.1 694.0 L803.1 687.0" stroke="#ff0000" fill="none"/>
<path d="M808.1 692.8 L811.1 690.0 L822.1 690.5 L825.1 690.0 L823.1 694.0 L827.1 695.7 L823.1 697.4 L825.1 701.5 L822.1 700.9 L811.1 701.5 L808.1 698.6 Z" stroke="#ff0000" fill="none"/>
<path d="M810.1 693.4 L812.1 691.8 L822.6 692.1 L822.6 699.3 L812.1 699.6 L810.1 698.0 Z" stroke="#ff0000" fill="none"/>
<path d="M813.1 693.9 L822.1 693.9" stroke="#ff0000" fill="none"/>
<path d="M813.1 697.5 L822.1 697.5" stroke="#ff0000" fill="none"/>
<path d="M800.1 695.7 L808.1 695.7" stroke="#ff0000" fill="none"/>
<path d="M805.6 702.9 L809.6 704.1 L814.6 713.9 L816.6 716.2 L812.1 716.5 L812.6 720.8 L809.1 718.2 L806.6 722.0 L805.6 719.1 L799.6 709.8 L800.6 705.8 Z" stroke="#ff0000" fill="none"/>
<path d="M806.1 704.9 L808.5 705.9 L813.4 715.1 L807.3 718.7 L801.7 709.8 L802.1 707.2 Z" stroke="#ff0000" fill="none"/>
<path d="M807.2 707.8 L811.7 715.6" stroke="#ff0000" fill="none"/>
<path d="M804.0 709.6 L808.5 717.4" stroke="#ff0000" fill="none"/>
<path d="M799.1 697.4 L803.1 704.4" stroke="#ff0000" fill="none"/>
<path d="M795.6 705.8 L796.6 709.8 L790.6 719.1 L789.6 722.0 L787.1 718.2 L783.6 720.8 L784.1 716.5 L779.6 716.2 L781.6 713.9 L786.6 704.1 L790.6 702.9 Z" stroke="#ff0000" fill="none"/>
<path d="M794.1 707.2 L794.5 709.8 L788.9 718.7 L782.8 715.1 L787.7 705.9 L790.1 704.9 Z" stroke="#ff0000" fill="none"/>
<path d="M792.2 709.6 L787.7 717.4" stroke="#ff0000" fill="none"/>
<path d="M789.0 707.8 L784.5 715.6" stroke="#ff0000" fill="none"/>
<path d="M797.1 697.4 L793.1 704.4" stroke="#ff0000" fill="none"/>
<path d="M788.1 698.6 L785.1 701.5 L774.1 700.9 L771.1 701.5 L773.1 697.4 L769.1 695.7 L773.1 694.0 L771.1 690.0 L774.1 690.5 L785.1 690.0 L788.1 692.8 Z" stroke="#ff0000" fill="none"/>
<path d="M786.1 698.0 L784.1 699.6 L773.6 699.3 L773.6 692.1 L784.1 691.8 L786.1 693.4 Z" stroke="#ff0000" fill="none"/>
<path d="M783.1 697.5 L774.1 697.5" stroke="#ff0000" fill="none"/>
<path d="M783.1 693.9 L774.1 693.9" stroke="#ff0000" fill="none"/>
<path d="M796.1 695.7 L788.1 695.7" stroke="#ff0000" fill="none"/>
<path d="M795.6 694.2 L798.1 692.7 L800.6 694.2 L800.6 697.2 L798.1 698.7 L795.6 697.2 Z" stroke="#ff0000" fill="none"/>
<path d="M843.8 629.6 L839.7 629.1 L833.2 620.2 L830.8 618.2 L835.2 617.3 L834.0 613.1 L837.9 615.1 L839.8 611.0 L841.2 613.7 L848.6 621.9 L848.2 626.0 Z" stroke="#ff0000" fill="none"/>
<path d="M843.0 627.7 L840.5 627.2 L834.1 618.8 L839.7 614.3 L846.5 622.3 L846.5 624.8 Z" stroke="#ff0000" fill="none"/>
<path d="M841.5 625.1 L835.8 618.1" stroke="#ff0000" fill="none"/>
<path d="M844.3 622.8 L838.6 615.8" stroke="#ff0000" fill="none"/>
<path d="M851.0 634.0 L846.0 627.8" stroke="#ff0000" fill="none"/>
<path d="M853.2 625.2 L851.6 621.4 L856.1 611.3 L856.6 608.3 L859.6 611.6 L862.7 608.5 L862.9 612.9 L867.3 612.5 L865.7 615.0 L862.3 625.5 L858.6 627.3 Z" stroke="#ff0000" fill="none"/>
<path d="M854.5 623.6 L853.7 621.1 L857.8 611.4 L864.4 614.0 L861.0 623.9 L858.7 625.2 Z" stroke="#ff0000" fill="none"/>
<path d="M856.0 621.0 L859.2 612.5" stroke="#ff0000" fill="none"/>
<path d="M859.4 622.2 L862.6 613.8" stroke="#ff0000" fill="none"/>
<path d="M853.0 633.7 L855.9 626.3" stroke="#ff0000" fill="none"/>
<path d="M861.7 631.2 L864.2 627.9 L875.2 626.7 L878.1 625.7 L876.7 630.0 L880.9 631.1 L877.3 633.4 L879.9 637.1 L876.8 637.0 L866.0 639.2 L862.6 636.9 Z" stroke="#ff0000" fill="none"/>
<path d="M863.8 631.5 L865.5 629.5 L875.9 628.2 L877.1 635.3 L866.7 637.3 L864.5 636.0 Z" stroke="#ff0000" fill="none"/>
<path d="M866.8 631.5 L875.7 630.1" stroke="#ff0000" fill="none"/>
<path d="M867.4 635.0 L876.3 633.6" stroke="#ff0000" fill="none"/>
<path d="M854.3 635.3 L862.2 634.0" stroke="#ff0000" fill="none"/>
<path d="M860.8 641.6 L864.9 642.1 L871.4 651.0 L873.8 653.0 L869.4 653.9 L870.6 658.1 L866.7 656.1 L864.8 660.2 L863.4 657.5 L856.0 649.3 L856.4 645.2 Z" stroke="#ff0000" fill="none"/>
<path d="M861.6 643.5 L864.1 644.0 L870.5 652.4 L864.9 656.9 L858.1 648.9 L858.1 646.4 Z" stroke="#ff0000" fill="none"/>
<path d="M863.1 646.1 L868.8 653.1" stroke="#ff0000" fill="none"/>
<path d="M860.3 648.4 L866.0 655.4" stroke="#ff0000" fill="none"/>
<path d="M853.6 637.2 L858.6 643.4" stroke="#ff0000" fill="none"/>
<path d="M851.4 646.0 L853.0 649.8 L848.5 659.9 L848.0 662.9 L845.0 659.6 L841.9 662.7 L841.7 658.3 L837.3 658.7 L838.9 656.2 L842.3 645.7 L846.0 643.9 Z" stroke="#ff0000" fill="none"/>
<path d="M850.1 647.6 L850.9 650.1 L846.8 659.8 L840.2 657.2 L843.6 647.3 L845.9 646.0 Z" stroke="#ff0000" fill="none"/>
<path d="M848.6 650.2 L845.4 658.7" stroke="#ff0000" fill="none"/>
<path d="M845.2 649.0 L842.0 657.4" stroke="#ff0000" fill="none"/>
<path d="M851.6 637.5 L848.7 644.9" stroke="#ff0000" fill="none"/>
<path d="M842.9 640.0 L840.4 643.3 L829.4 644.5 L826.5 645.5 L827.9 641.2 L823.7 640.1 L827.3 637.8 L824.7 634.1 L827.8 634.2 L838.6 632.0 L842.0 634.3 Z" stroke="#ff0000" fill="none"/>
<path d="M840.8 639.7 L839.1 641.7 L828.7 643.0 L827.5 635.9 L837.9 633.9 L840.1 635.2 Z" stroke="#ff0000" fill="none"/>
<path d="M837.8 639.7 L828.9 641.1" stroke="#ff0000" fill="none"/>
<path d="M837.2 636.2 L828.3 637.6" stroke="#ff0000" fill="none"/>
<path d="M850.3 635.9 L842.4 637.2" stroke="#ff0000" fill="none"/>
<path d="M849.8 634.1 L852.3 632.6 L854.8 634.1 L854.8 637.1 L852.3 638.6 L849.8 637.1 Z" stroke="#ff0000" fill="none"/>
<path d="M977.3 649.7 L973.9 647.3 L972.4 636.4 L971.3 633.5 L975.6 634.7 L976.5 630.5 L979.0 634.1 L982.6 631.3 L982.6 634.4 L985.2 645.1 L983.0 648.6 Z" stroke="#ff0000" fill="none"/>
<path d="M977.5 647.6 L975.6 645.9 L973.9 635.6 L980.9 634.2 L983.2 644.4 L982.0 646.7 Z" stroke="#ff0000" fill="none"/>
<path d="M977.4 644.5 L975.7 635.7" stroke="#ff0000" fill="none"/>
<path d="M981.0 643.9 L979.3 635.0" stroke="#ff0000" fill="none"/>
<path d="M980.9 653.0 L980.2 649.1" stroke="#ff0000" fill="none"/>
<path d="M983.9 648.9 L984.3 644.8 L993.0 638.0 L994.9 635.6 L996.0 639.9 L1000.2 638.6 L998.3 642.5 L1002.4 644.3 L999.8 645.8 L991.9 653.4 L987.7 653.2 Z" stroke="#ff0000" fill="none"/>
<path d="M985.8 648.0 L986.3 645.5 L994.4 638.9 L999.1 644.2 L991.4 651.4 L988.8 651.5 Z" stroke="#ff0000" fill="none"/>
<path d="M988.4 646.4 L995.2 640.5" stroke="#ff0000" fill="none"/>
<path d="M990.8 649.1 L997.6 643.2" stroke="#ff0000" fill="none"/>
<path d="M982.8 653.7 L985.8 651.1" stroke="#ff0000" fill="none"/>
<path d="M987.9 654.2 L991.7 652.5 L1001.9 656.6 L1004.9 657.1 L1001.7 660.2 L1004.9 663.1 L1000.6 663.5 L1001.2 667.9 L998.5 666.4 L987.9 663.4 L986.0 659.7 Z" stroke="#ff0000" fill="none"/>
<path d="M989.6 655.4 L992.0 654.6 L1001.8 658.3 L999.5 665.0 L989.5 662.0 L988.1 659.8 Z" stroke="#ff0000" fill="none"/>
<path d="M992.3 656.9 L1000.8 659.8" stroke="#ff0000" fill="none"/>
<path d="M991.1 660.3 L999.6 663.2" stroke="#ff0000" fill="none"/>
<path d="M983.2 655.7 L987.0 657.0" stroke="#ff0000" fill="none"/>
<path d="M985.3 660.3 L988.7 662.7 L990.2 673.6 L991.3 676.5 L987.0 675.3 L986.1 679.5 L983.6 675.9 L980.0 678.7 L980.0 675.6 L977.4 664.9 L979.6 661.4 Z" stroke="#ff0000" fill="none"/>
<path d="M985.1 662.4 L987.0 664.1 L988.7 674.4 L981.7 675.8 L979.4 665.6 L980.6 663.3 Z" stroke="#ff0000" fill="none"/>
<path d="M985.2 665.5 L986.9 674.3" stroke="#ff0000" fill="none"/>
<path d="M981.6 666.1 L983.3 675.0" stroke="#ff0000" fill="none"/>
<path d="M981.7 657.0 L982.4 660.9" stroke="#ff0000" fill="none"/>
<path d="M978.7 661.1 L978.3 665.2 L969.6 672.0 L967.7 674.4 L966.6 670.1 L962.4 671.4 L964.3 667.5 L960.2 665.7 L962.8 664.2 L970.7 656.6 L974.9 656.8 Z" stroke="#ff0000" fill="none"/>
<path d="M976.8 662.0 L976.3 664.5 L968.2 671.1 L963.5 665.8 L971.2 658.6 L973.8 658.5 Z" stroke="#ff0000" fill="none"/>
<path d="M974.2 663.6 L967.4 669.5" stroke="#ff0000" fill="none"/>
<path d="M971.8 660.9 L965.0 666.8" stroke="#ff0000" fill="none"/>
<path d="M979.8 656.3 L976.8 658.9" stroke="#ff0000" fill="none"/>
<path d="M974.7 655.8 L970.9 657.5 L960.7 653.4 L957.7 652.9 L960.9 649.8 L957.7 646.9 L962.0 646.5 L961.4 642.1 L964.1 643.6 L974.7 646.6 L976.6 650.3 Z" stroke="#ff0000" fill="none"/>
<path d="M973.0 654.6 L970.6 655.4 L960.8 651.7 L963.1 645.0 L973.1 648.0 L974.5 650.2 Z" stroke="#ff0000" fill="none"/>
<path d="M970.3 653.1 L961.8 650.2" stroke="#ff0000" fill="none"/>
<path d="M971.5 649.7 L963.0 646.8" stroke="#ff0000" fill="none"/>
<path d="M979.4 654.3 L975.6 653.0" stroke="#ff0000" fill="none"/>
<path d="M978.8 653.5 L981.3 652.0 L983.8 653.5 L983.8 656.5 L981.3 658.0 L978.8 656.5 Z" stroke="#ff0000" fill="none"/>
<path d="M945.4 738.2 L941.7 736.4 L938.3 725.9 L936.7 723.4 L941.1 723.8 L941.3 719.4 L944.4 722.5 L947.4 719.2 L947.9 722.2 L952.4 732.3 L950.8 736.1 Z" stroke="#ff0000" fill="none"/>
<path d="M945.3 736.1 L943.0 734.8 L939.6 724.9 L946.2 722.3 L950.3 732.0 L949.5 734.5 Z" stroke="#ff0000" fill="none"/>
<path d="M944.6 733.1 L941.4 724.7" stroke="#ff0000" fill="none"/>
<path d="M948.0 731.9 L944.8 723.4" stroke="#ff0000" fill="none"/>
<path d="M951.0 744.6 L948.1 737.2" stroke="#ff0000" fill="none"/>
<path d="M955.8 736.9 L955.4 732.8 L962.8 724.6 L964.2 721.9 L966.1 726.0 L970.0 724.0 L968.8 728.2 L973.2 729.1 L970.8 731.1 L964.3 740.0 L960.2 740.5 Z" stroke="#ff0000" fill="none"/>
<path d="M957.5 735.7 L957.5 733.2 L964.3 725.2 L969.9 729.7 L963.5 738.1 L961.0 738.6 Z" stroke="#ff0000" fill="none"/>
<path d="M959.7 733.7 L965.4 726.7" stroke="#ff0000" fill="none"/>
<path d="M962.5 736.0 L968.2 729.0" stroke="#ff0000" fill="none"/>
<path d="M953.0 744.9 L958.0 738.7" stroke="#ff0000" fill="none"/>
<path d="M962.0 745.2 L965.4 742.9 L976.2 745.1 L979.3 745.0 L976.7 748.7 L980.3 751.0 L976.1 752.1 L977.5 756.4 L974.6 755.4 L963.6 754.2 L961.1 750.9 Z" stroke="#ff0000" fill="none"/>
<path d="M963.9 746.1 L966.1 744.8 L976.5 746.8 L975.3 753.9 L964.9 752.6 L963.2 750.6 Z" stroke="#ff0000" fill="none"/>
<path d="M966.8 747.1 L975.7 748.5" stroke="#ff0000" fill="none"/>
<path d="M966.2 750.6 L975.1 752.0" stroke="#ff0000" fill="none"/>
<path d="M953.7 746.8 L961.6 748.1" stroke="#ff0000" fill="none"/>
<path d="M958.0 754.8 L961.7 756.6 L965.1 767.1 L966.7 769.6 L962.3 769.2 L962.1 773.6 L959.0 770.5 L956.0 773.8 L955.5 770.8 L951.0 760.7 L952.6 756.9 Z" stroke="#ff0000" fill="none"/>
<path d="M958.1 756.9 L960.4 758.2 L963.8 768.1 L957.2 770.7 L953.1 761.0 L953.9 758.5 Z" stroke="#ff0000" fill="none"/>
<path d="M958.8 759.9 L962.0 768.3" stroke="#ff0000" fill="none"/>
<path d="M955.4 761.1 L958.6 769.6" stroke="#ff0000" fill="none"/>
<path d="M952.4 748.4 L955.3 755.8" stroke="#ff0000" fill="none"/>
<path d="M947.6 756.1 L948.0 760.2 L940.6 768.4 L939.2 771.1 L937.3 767.0 L933.4 769.0 L934.6 764.8 L930.2 763.9 L932.6 761.9 L939.1 753.0 L943.2 752.5 Z" stroke="#ff0000" fill="none"/>
<path d="M945.9 757.3 L945.9 759.8 L939.1 767.8 L933.5 763.3 L939.9 754.9 L942.4 754.4 Z" stroke="#ff0000" fill="none"/>
<path d="M943.7 759.3 L938.0 766.3" stroke="#ff0000" fill="none"/>
<path d="M940.9 757.0 L935.2 764.0" stroke="#ff0000" fill="none"/>
<path d="M950.4 748.1 L945.4 754.3" stroke="#ff0000" fill="none"/>
<path d="M941.4 747.8 L938.0 750.1 L927.2 747.9 L924.1 748.0 L926.7 744.3 L923.1 742.0 L927.3 740.9 L925.9 736.6 L928.8 737.6 L939.8 738.8 L942.3 742.1 Z" stroke="#ff0000" fill="none"/>
<path d="M939.5 746.9 L937.3 748.2 L926.9 746.2 L928.1 739.1 L938.5 740.4 L940.2 742.4 Z" stroke="#ff0000" fill="none"/>
<path d="M936.6 745.9 L927.7 744.5" stroke="#ff0000" fill="none"/>
<path d="M937.2 742.4 L928.3 741.0" stroke="#ff0000" fill="none"/>
<path d="M949.7 746.2 L941.8 744.9" stroke="#ff0000" fill="none"/>
<path d="M949.2 745.0 L951.7 743.5 L954.2 745.0 L954.2 748.0 L951.7 749.5 L949.2 748.0 Z" stroke="#ff0000" fill="none"/>
<path d="M997.8 748.9 L993.9 747.4 L989.8 737.1 L988.0 734.7 L992.5 734.8 L992.4 730.4 L995.6 733.3 L998.4 729.8 L999.2 732.8 L1004.3 742.5 L1003.0 746.4 Z" stroke="#ff0000" fill="none"/>
<path d="M997.5 746.8 L995.2 745.7 L991.0 736.0 L997.5 733.0 L1002.2 742.4 L1001.6 744.9 Z" stroke="#ff0000" fill="none"/>
<path d="M996.7 743.9 L992.8 735.7" stroke="#ff0000" fill="none"/>
<path d="M999.9 742.4 L996.1 734.2" stroke="#ff0000" fill="none"/>
<path d="M1003.4 754.0 L1000.4 747.6" stroke="#ff0000" fill="none"/>
<path d="M1007.0 746.8 L1006.4 742.7 L1013.2 734.0 L1014.4 731.2 L1016.6 735.2 L1020.3 732.9 L1019.4 737.1 L1023.8 737.8 L1021.6 739.9 L1015.8 749.3 L1011.7 750.1 Z" stroke="#ff0000" fill="none"/>
<path d="M1008.6 745.5 L1008.5 742.9 L1014.8 734.5 L1020.6 738.6 L1014.9 747.4 L1012.4 748.1 Z" stroke="#ff0000" fill="none"/>
<path d="M1010.8 743.3 L1015.9 735.9" stroke="#ff0000" fill="none"/>
<path d="M1013.7 745.4 L1018.9 738.0" stroke="#ff0000" fill="none"/>
<path d="M1005.3 754.2 L1009.4 748.4" stroke="#ff0000" fill="none"/>
<path d="M1013.4 753.7 L1016.7 751.1 L1027.6 752.6 L1030.6 752.3 L1028.3 756.2 L1032.1 758.2 L1028.0 759.6 L1029.6 763.8 L1026.7 763.0 L1015.7 762.6 L1012.9 759.4 Z" stroke="#ff0000" fill="none"/>
<path d="M1015.4 754.5 L1017.5 753.0 L1027.9 754.3 L1027.3 761.4 L1016.8 760.8 L1015.0 759.0 Z" stroke="#ff0000" fill="none"/>
<path d="M1018.3 755.2 L1027.3 756.0" stroke="#ff0000" fill="none"/>
<path d="M1018.0 758.8 L1027.0 759.6" stroke="#ff0000" fill="none"/>
<path d="M1006.2 756.0 L1013.2 756.6" stroke="#ff0000" fill="none"/>
<path d="M1010.6 762.7 L1014.5 764.2 L1018.6 774.5 L1020.4 776.9 L1015.9 776.8 L1016.0 781.2 L1012.8 778.3 L1010.0 781.8 L1009.2 778.8 L1004.1 769.1 L1005.4 765.2 Z" stroke="#ff0000" fill="none"/>
<path d="M1010.9 764.8 L1013.2 765.9 L1017.4 775.6 L1010.9 778.6 L1006.2 769.2 L1006.8 766.7 Z" stroke="#ff0000" fill="none"/>
<path d="M1011.7 767.7 L1015.6 775.9" stroke="#ff0000" fill="none"/>
<path d="M1008.5 769.2 L1012.3 777.4" stroke="#ff0000" fill="none"/>
<path d="M1005.0 757.6 L1008.0 764.0" stroke="#ff0000" fill="none"/>
<path d="M1001.4 764.8 L1002.0 768.9 L995.2 777.6 L994.0 780.4 L991.8 776.4 L988.1 778.7 L989.0 774.5 L984.6 773.8 L986.8 771.7 L992.6 762.3 L996.7 761.5 Z" stroke="#ff0000" fill="none"/>
<path d="M999.8 766.1 L999.9 768.7 L993.6 777.1 L987.8 773.0 L993.5 764.2 L996.0 763.5 Z" stroke="#ff0000" fill="none"/>
<path d="M997.6 768.3 L992.5 775.7" stroke="#ff0000" fill="none"/>
<path d="M994.7 766.2 L989.5 773.6" stroke="#ff0000" fill="none"/>
<path d="M1003.1 757.4 L999.0 763.2" stroke="#ff0000" fill="none"/>
<path d="M995.0 757.9 L991.7 760.5 L980.8 759.0 L977.8 759.3 L980.1 755.4 L976.3 753.4 L980.4 752.0 L978.8 747.8 L981.7 748.6 L992.7 749.0 L995.5 752.2 Z" stroke="#ff0000" fill="none"/>
<path d="M993.0 757.1 L990.9 758.6 L980.5 757.3 L981.1 750.2 L991.6 750.8 L993.4 752.6 Z" stroke="#ff0000" fill="none"/>
<path d="M990.1 756.4 L981.1 755.6" stroke="#ff0000" fill="none"/>
<path d="M990.4 752.8 L981.4 752.0" stroke="#ff0000" fill="none"/>
<path d="M1002.2 755.6 L995.2 755.0" stroke="#ff0000" fill="none"/>
<path d="M1001.7 754.3 L1004.2 752.8 L1006.7 754.3 L1006.7 757.3 L1004.2 758.8 L1001.7 757.3 Z" stroke="#ff0000" fill="none"/>
<circle cx="939.5" cy="712.5" r="3.6" fill="#fff" stroke="none"/>
<circle cx="972.5" cy="696.5" r="3.6" fill="#fff" stroke="none"/>
<path d="M747.4 938.2 L750.0 939.5 L753.5 941.2 L757.7 943.3 L762.2 945.5 L766.7 947.6 L770.8 949.5 L774.6 951.1 L778.2 952.7 L781.8 954.2 L785.5 955.6 L789.3 956.9 L793.4 958.1 L797.7 959.1 L802.3 960.0 L807.0 960.8 L811.7 961.4 L816.5 962.0 L821.2 962.5 L825.9 962.9 L830.5 963.3 L835.2 963.6 L839.9 963.7 L844.5 963.6 L849.0 963.4 L853.4 962.9 L857.8 962.3 L862.1 961.5 L866.4 960.5 L870.7 959.4 L875.0 958.1 L879.4 956.6 L884.0 954.9 L888.6 953.0 L893.0 951.1 L897.3 949.3 L901.1 947.7 L904.5 946.4 L907.5 945.3 L910.3 944.4 L913.0 943.4 L915.7 942.2 L918.5 940.8 L921.2 939.1 L923.8 937.1 L926.4 934.9 L929.1 932.7 L932.2 930.6 L935.9 928.6 L940.6 926.6 L946.2 924.6 L952.2 922.6 L957.9 920.8 L962.8 919.3 L966.3 918.2" stroke="#00ffff" fill="none"/>
<path d="M746.5 940.0 L749.1 941.2 L752.6 943.0 L756.8 945.1 L761.3 947.3 L765.9 949.5 L770.0 951.3 L773.8 953.0 L777.4 954.6 L781.1 956.1 L784.9 957.5 L788.8 958.9 L792.9 960.0 L797.3 961.1 L802.0 962.0 L806.7 962.8 L811.5 963.4 L816.3 964.0 L821.0 964.5 L825.7 964.9 L830.4 965.3 L835.2 965.6 L839.9 965.7 L844.6 965.6 L849.2 965.4 L853.7 964.9 L858.2 964.2 L862.6 963.4 L866.9 962.4 L871.2 961.3 L875.6 960.0 L880.2 958.5 L884.8 956.7 L889.4 954.8 L893.8 952.9 L898.0 951.1 L901.8 949.6 L905.2 948.3 L908.2 947.2 L911.0 946.2 L913.8 945.2 L916.6 944.0 L919.6 942.5 L922.5 940.6 L925.1 938.6 L927.6 936.5 L930.3 934.4 L933.2 932.3 L936.7 930.4 L941.2 928.5 L946.8 926.5 L952.8 924.5 L958.5 922.7 L963.5 921.2 L966.9 920.1" stroke="#00ffff" fill="none"/>
<path d="M803.0 879.1 L803.6 881.2 L804.3 884.2 L805.2 887.6 L806.3 891.4 L807.6 895.3 L809.0 899.0 L810.7 902.7 L812.5 906.6 L814.6 910.6 L816.8 914.6 L819.0 918.3 L821.2 921.7 L823.4 924.8 L825.7 927.7 L828.0 930.4 L830.4 932.9 L832.8 935.2 L835.1 937.3 L837.4 939.2 L839.6 940.8 L841.8 942.3 L844.1 943.6 L846.5 944.8 L849.0 946.0 L851.7 947.1 L854.5 948.1 L857.5 949.0 L860.5 949.8 L863.5 950.6 L866.4 951.2 L869.3 951.8 L872.2 952.3 L875.0 952.8 L877.9 953.1 L880.8 953.2 L883.7 953.0 L886.8 952.5 L890.1 951.6 L893.5 950.5 L896.6 949.3 L899.2 948.4 L901.1 947.7" stroke="#00ffff" fill="none"/>
<path d="M801.1 879.6 L801.6 881.7 L802.4 884.7 L803.3 888.2 L804.4 892.0 L805.7 896.0 L807.2 899.8 L808.9 903.6 L810.8 907.5 L812.9 911.6 L815.1 915.6 L817.3 919.4 L819.6 922.9 L821.9 926.0 L824.2 929.0 L826.6 931.7 L829.0 934.3 L831.4 936.7 L833.8 938.8 L836.2 940.8 L838.5 942.5 L840.8 944.0 L843.2 945.4 L845.6 946.6 L848.2 947.8 L851.0 949.0 L854.0 950.0 L857.0 951.0 L860.0 951.8 L863.0 952.5 L866.0 953.2 L868.9 953.7 L871.9 954.3 L874.8 954.7 L877.9 955.1 L880.9 955.1 L884.0 955.0 L887.3 954.4 L890.8 953.5 L894.2 952.3 L897.3 951.2 L899.9 950.2 L901.8 949.6" stroke="#00ffff" fill="none"/>
<path d="M822.9 963.4 L822.4 965.1 L821.7 967.5 L821.0 970.3 L820.0 973.3 L818.9 976.3 L817.7 979.0 L816.3 981.5 L814.7 984.0 L812.9 986.5 L811.0 988.8 L809.1 991.0 L807.3 992.9 L805.3 994.5 L803.2 996.0 L801.0 997.2 L799.0 998.3 L797.2 999.1 L796.0 999.8" stroke="#00ffff" fill="none"/>
<path d="M821.2 962.9 L820.7 964.6 L820.0 967.0 L819.2 969.8 L818.3 972.7 L817.3 975.6 L816.1 978.1 L814.8 980.5 L813.2 983.0 L811.5 985.4 L809.7 987.7 L807.9 989.8 L806.1 991.5 L804.3 993.0 L802.3 994.4 L800.2 995.6 L798.2 996.7 L796.4 997.5 L795.1 998.2" stroke="#00ffff" fill="none"/>
<path d="M916.7 942.5 L915.9 944.2 L914.8 946.5 L913.6 949.2 L912.2 952.2 L910.9 955.2 L909.8 958.1 L908.8 960.9 L907.9 963.9 L907.0 966.9 L906.1 969.8 L905.3 972.7 L904.6 975.5 L903.9 978.3 L903.2 981.2 L902.5 984.0 L901.9 986.6 L901.5 988.7 L901.1 990.3" stroke="#00ffff" fill="none"/>
<path d="M915.1 941.7 L914.3 943.4 L913.2 945.7 L911.9 948.5 L910.6 951.5 L909.3 954.6 L908.1 957.5 L907.1 960.4 L906.2 963.3 L905.3 966.4 L904.4 969.4 L903.6 972.3 L902.9 975.0 L902.1 977.9 L901.4 980.8 L900.8 983.6 L900.2 986.2 L899.7 988.3 L899.3 989.9" stroke="#00ffff" fill="none"/>
<path d="M821.2 918.2 L819.3 915.3 L818.6 911.0 L819.9 906.0 L822.8 900.7 L826.9 896.0 L830.9 893.0 L834.2 891.3 L834.9 895.0 L835.0 900.0 L833.9 906.1 L831.6 911.6 L828.5 915.8 L824.6 917.9 Z" stroke="#00ffff" fill="none"/>
<path d="M824.4 913.1 L826.4 907.4 L828.5 901.8 L831.5 895.0" stroke="#ff0000" fill="none"/>
<path d="M816.0 921.7 L814.1 924.4 L810.7 926.7 L806.2 927.2 L801.0 926.4 L796.0 924.2 L792.3 921.5 L789.9 919.0 L792.7 917.0 L796.9 915.1 L802.3 914.1 L807.5 914.3 L811.9 915.7 L814.7 918.6 Z" stroke="#00ffff" fill="none"/>
<path d="M810.8 920.5 L805.6 920.6 L800.3 920.6 L793.7 920.2" stroke="#ff0000" fill="none"/>
<path d="M810.8 958.1 L807.4 958.0 L803.5 956.2 L800.2 952.4 L797.7 947.2 L796.4 941.4 L796.3 936.5 L796.9 932.9 L800.3 934.3 L804.4 937.0 L808.6 941.3 L811.6 946.1 L813.1 950.9 L812.5 955.2 Z" stroke="#00ffff" fill="none"/>
<path d="M808.6 952.7 L805.2 948.0 L802.0 943.2 L798.3 937.1" stroke="#ff0000" fill="none"/>
<path d="M847.2 959.9 L843.9 960.8 L839.7 960.2 L835.6 957.5 L831.9 953.3 L829.0 948.1 L827.7 943.5 L827.3 939.9 L830.9 940.3 L835.5 941.7 L840.6 944.5 L844.8 948.3 L847.5 952.4 L848.1 956.6 Z" stroke="#00ffff" fill="none"/>
<path d="M843.7 955.4 L839.2 951.9 L834.9 948.3 L829.7 943.5" stroke="#ff0000" fill="none"/>
<path d="M861.1 946.0 L858.3 944.0 L855.9 940.3 L855.2 935.2 L855.9 929.3 L857.9 923.5 L860.4 919.2 L862.9 916.4 L865.0 919.5 L867.0 924.1 L868.3 930.1 L868.2 936.0 L866.9 941.0 L864.1 944.4 Z" stroke="#00ffff" fill="none"/>
<path d="M862.1 940.1 L861.8 934.2 L861.7 928.2 L861.9 920.8" stroke="#ff0000" fill="none"/>
<path d="M902.8 944.2 L899.9 945.9 L895.8 946.4 L891.3 944.9 L886.8 941.9 L882.9 937.7 L880.6 933.6 L879.4 930.3 L882.9 929.7 L887.6 929.9 L893.1 931.2 L897.9 933.7 L901.4 936.9 L902.9 940.9 Z" stroke="#00ffff" fill="none"/>
<path d="M898.5 940.9 L893.4 938.6 L888.5 936.3 L882.5 933.1" stroke="#ff0000" fill="none"/>
<path d="M791.7 961.6 L791.6 964.9 L790.0 968.7 L786.5 971.6 L781.6 973.8 L776.2 974.8 L771.6 974.6 L768.2 973.8 L769.5 970.6 L772.0 966.7 L775.9 962.8 L780.5 960.1 L784.9 958.9 L788.9 959.7 Z" stroke="#00ffff" fill="none"/>
<path d="M786.7 963.5 L782.3 966.5 L777.8 969.4 L772.1 972.7" stroke="#ff0000" fill="none"/>
<path d="M862.9 967.7 L863.6 971.0 L862.9 975.0 L860.2 978.7 L856.0 981.9 L850.9 984.2 L846.4 985.1 L842.9 985.1 L843.4 981.6 L844.9 977.3 L847.8 972.6 L851.6 968.9 L855.7 966.7 L859.8 966.5 Z" stroke="#00ffff" fill="none"/>
<path d="M858.5 970.7 L854.9 974.7 L851.2 978.5 L846.4 983.1" stroke="#ff0000" fill="none"/>
<path d="M794.3 873.4 L790.0 873.0 L783.4 864.2 L781.0 862.3 L785.6 861.1 L784.4 856.9 L788.3 858.8 L790.2 854.6 L791.7 857.2 L799.2 865.3 L798.9 869.5 Z" stroke="#00ffff" fill="none"/>
<path d="M793.4 871.5 L790.9 871.0 L784.4 862.7 L790.1 857.9 L797.1 865.8 L797.1 868.4 Z" stroke="#ff0000" fill="none"/>
<path d="M792.0 868.8 L786.2 861.9" stroke="#ff0000" fill="none"/>
<path d="M794.7 866.5 L789.0 859.6" stroke="#ff0000" fill="none"/>
<path d="M801.7 877.6 L796.6 871.4" stroke="#00ffff" fill="none"/>
<path d="M803.6 868.7 L801.8 864.8 L806.1 854.7 L806.6 851.7 L809.9 855.0 L812.9 851.8 L813.2 856.2 L817.9 855.8 L816.3 858.4 L813.1 868.9 L809.2 870.7 Z" stroke="#00ffff" fill="none"/>
<path d="M804.8 867.0 L804.0 864.5 L807.9 854.8 L814.9 857.3 L811.6 867.3 L809.4 868.6 Z" stroke="#ff0000" fill="none"/>
<path d="M806.4 864.4 L809.5 855.9" stroke="#ff0000" fill="none"/>
<path d="M809.8 865.6 L812.9 857.2" stroke="#ff0000" fill="none"/>
<path d="M803.7 877.2 L806.4 869.7" stroke="#00ffff" fill="none"/>
<path d="M812.3 874.4 L814.8 870.9 L825.7 869.6 L828.5 868.5 L827.3 873.0 L831.6 874.1 L827.9 876.5 L830.6 880.3 L827.6 880.3 L816.8 882.8 L813.4 880.3 Z" stroke="#00ffff" fill="none"/>
<path d="M814.4 874.7 L816.1 872.7 L826.5 871.2 L827.8 878.5 L817.5 880.7 L815.2 879.4 Z" stroke="#ff0000" fill="none"/>
<path d="M817.5 874.7 L826.3 873.2" stroke="#ff0000" fill="none"/>
<path d="M818.1 878.3 L826.9 876.7" stroke="#ff0000" fill="none"/>
<path d="M805.0 878.8 L812.8 877.4" stroke="#00ffff" fill="none"/>
<path d="M811.7 884.8 L816.0 885.2 L822.6 894.0 L825.0 895.9 L820.4 897.1 L821.6 901.3 L817.7 899.4 L815.8 903.6 L814.3 901.0 L806.8 892.9 L807.1 888.7 Z" stroke="#00ffff" fill="none"/>
<path d="M812.6 886.7 L815.1 887.2 L821.6 895.5 L815.9 900.3 L808.9 892.4 L808.9 889.8 Z" stroke="#ff0000" fill="none"/>
<path d="M814.0 889.4 L819.8 896.3" stroke="#ff0000" fill="none"/>
<path d="M811.3 891.7 L817.0 898.6" stroke="#ff0000" fill="none"/>
<path d="M804.3 880.6 L809.4 886.8" stroke="#00ffff" fill="none"/>
<path d="M802.4 889.5 L804.2 893.4 L799.9 903.5 L799.4 906.5 L796.1 903.2 L793.1 906.4 L792.8 902.0 L788.1 902.4 L789.7 899.8 L792.9 889.3 L796.8 887.5 Z" stroke="#00ffff" fill="none"/>
<path d="M801.2 891.2 L802.0 893.7 L798.1 903.4 L791.1 900.9 L794.4 890.9 L796.6 889.6 Z" stroke="#ff0000" fill="none"/>
<path d="M799.6 893.8 L796.5 902.3" stroke="#ff0000" fill="none"/>
<path d="M796.2 892.6 L793.1 901.0" stroke="#ff0000" fill="none"/>
<path d="M802.3 881.0 L799.6 888.5" stroke="#00ffff" fill="none"/>
<path d="M793.7 883.8 L791.2 887.3 L780.3 888.6 L777.5 889.7 L778.7 885.2 L774.4 884.1 L778.1 881.7 L775.4 877.9 L778.4 877.9 L789.2 875.4 L792.6 877.9 Z" stroke="#00ffff" fill="none"/>
<path d="M791.6 883.5 L789.9 885.5 L779.5 887.0 L778.2 879.7 L788.5 877.5 L790.8 878.8 Z" stroke="#ff0000" fill="none"/>
<path d="M788.5 883.5 L779.7 885.0" stroke="#ff0000" fill="none"/>
<path d="M787.9 879.9 L779.1 881.5" stroke="#ff0000" fill="none"/>
<path d="M801.0 879.4 L793.2 880.8" stroke="#00ffff" fill="none"/>
<path d="M800.5 877.6 L803.0 876.1 L805.5 877.6 L805.5 880.6 L803.0 882.1 L800.5 880.6 Z" stroke="#00ffff" fill="none"/>
<path d="M740.2 930.7 L736.2 929.3 L731.7 919.3 L729.8 916.9 L734.4 916.7 L734.2 912.4 L737.7 915.1 L740.5 911.4 L741.3 914.4 L746.8 923.9 L745.5 927.9 Z" stroke="#00ffff" fill="none"/>
<path d="M739.8 928.6 L737.4 927.6 L733.0 918.1 L739.6 914.7 L744.7 923.9 L744.1 926.4 Z" stroke="#ff0000" fill="none"/>
<path d="M739.0 925.7 L734.9 917.6" stroke="#ff0000" fill="none"/>
<path d="M742.2 924.0 L738.1 916.0" stroke="#ff0000" fill="none"/>
<path d="M746.5 936.4 L742.9 929.3" stroke="#00ffff" fill="none"/>
<path d="M750.3 928.2 L749.4 924.0 L755.9 915.1 L757.1 912.3 L759.5 916.3 L763.2 913.9 L762.5 918.2 L767.1 918.8 L765.0 921.0 L759.5 930.6 L755.4 931.4 Z" stroke="#00ffff" fill="none"/>
<path d="M751.9 926.8 L751.6 924.2 L757.6 915.6 L763.9 919.7 L758.4 928.7 L755.9 929.4 Z" stroke="#ff0000" fill="none"/>
<path d="M754.1 924.6 L759.0 917.1" stroke="#ff0000" fill="none"/>
<path d="M757.1 926.6 L762.0 919.1" stroke="#ff0000" fill="none"/>
<path d="M748.5 936.5 L752.8 929.8" stroke="#00ffff" fill="none"/>
<path d="M757.5 935.7 L760.7 932.9 L771.6 934.1 L774.7 933.6 L772.5 937.7 L776.4 939.7 L772.3 941.3 L774.0 945.6 L771.1 944.8 L760.1 944.9 L757.2 941.7 Z" stroke="#00ffff" fill="none"/>
<path d="M759.5 936.4 L761.6 934.9 L772.1 935.8 L771.7 943.2 L761.2 943.0 L759.3 941.2 Z" stroke="#ff0000" fill="none"/>
<path d="M762.5 937.2 L771.5 937.7" stroke="#ff0000" fill="none"/>
<path d="M762.3 940.8 L771.3 941.3" stroke="#ff0000" fill="none"/>
<path d="M749.4 938.3 L757.4 938.7" stroke="#00ffff" fill="none"/>
<path d="M754.6 945.7 L758.6 947.1 L763.1 957.1 L765.0 959.5 L760.4 959.7 L760.6 964.0 L757.1 961.3 L754.3 965.0 L753.5 962.0 L748.0 952.5 L749.3 948.5 Z" stroke="#00ffff" fill="none"/>
<path d="M755.0 947.8 L757.4 948.8 L761.8 958.3 L755.2 961.7 L750.1 952.5 L750.7 950.0 Z" stroke="#ff0000" fill="none"/>
<path d="M755.8 950.7 L759.9 958.8" stroke="#ff0000" fill="none"/>
<path d="M752.6 952.4 L756.7 960.4" stroke="#ff0000" fill="none"/>
<path d="M748.3 940.0 L751.9 947.1" stroke="#00ffff" fill="none"/>
<path d="M744.5 948.2 L745.4 952.4 L738.9 961.3 L737.7 964.1 L735.3 960.1 L731.6 962.5 L732.3 958.2 L727.7 957.6 L729.8 955.4 L735.3 945.8 L739.4 945.0 Z" stroke="#00ffff" fill="none"/>
<path d="M742.9 949.6 L743.2 952.2 L737.2 960.8 L730.9 956.7 L736.4 947.7 L738.9 947.0 Z" stroke="#ff0000" fill="none"/>
<path d="M740.7 951.8 L735.8 959.3" stroke="#ff0000" fill="none"/>
<path d="M737.7 949.8 L732.8 957.3" stroke="#ff0000" fill="none"/>
<path d="M746.3 939.9 L742.0 946.6" stroke="#00ffff" fill="none"/>
<path d="M737.3 940.7 L734.1 943.5 L723.2 942.3 L720.1 942.8 L722.3 938.7 L718.4 936.7 L722.5 935.1 L720.8 930.8 L723.7 931.6 L734.7 931.5 L737.6 934.7 Z" stroke="#00ffff" fill="none"/>
<path d="M735.3 940.0 L733.2 941.5 L722.7 940.6 L723.1 933.2 L733.6 933.4 L735.5 935.2 Z" stroke="#ff0000" fill="none"/>
<path d="M732.3 939.2 L723.3 938.7" stroke="#ff0000" fill="none"/>
<path d="M732.5 935.6 L723.5 935.1" stroke="#ff0000" fill="none"/>
<path d="M745.4 938.1 L737.4 937.7" stroke="#00ffff" fill="none"/>
<path d="M744.9 936.7 L747.4 935.2 L749.9 936.7 L749.9 939.7 L747.4 941.2 L744.9 939.7 Z" stroke="#00ffff" fill="none"/>
<path d="M788.2 992.9 L784.0 992.0 L778.7 982.3 L776.6 980.1 L781.2 979.6 L780.6 975.2 L784.3 977.6 L786.8 973.7 L787.9 976.6 L794.2 985.6 L793.2 989.7 Z" stroke="#00ffff" fill="none"/>
<path d="M787.6 990.9 L785.1 990.1 L779.9 981.0 L786.2 977.1 L792.0 985.8 L791.7 988.4 Z" stroke="#ff0000" fill="none"/>
<path d="M786.5 988.0 L781.8 980.4" stroke="#ff0000" fill="none"/>
<path d="M789.6 986.1 L784.8 978.5" stroke="#ff0000" fill="none"/>
<path d="M794.9 998.1 L790.7 991.3" stroke="#00ffff" fill="none"/>
<path d="M798.0 989.6 L796.8 985.5 L802.5 976.1 L803.4 973.1 L806.1 976.9 L809.6 974.2 L809.3 978.6 L814.0 978.8 L812.0 981.1 L807.4 991.1 L803.3 992.4 Z" stroke="#00ffff" fill="none"/>
<path d="M799.5 988.1 L799.0 985.5 L804.2 976.4 L810.8 979.9 L806.2 989.4 L803.8 990.3 Z" stroke="#ff0000" fill="none"/>
<path d="M801.5 985.7 L805.7 977.8" stroke="#ff0000" fill="none"/>
<path d="M804.6 987.4 L808.9 979.5" stroke="#ff0000" fill="none"/>
<path d="M796.9 998.0 L800.7 991.0" stroke="#00ffff" fill="none"/>
<path d="M805.9 996.5 L808.8 993.3 L819.8 993.6 L822.8 992.9 L820.9 997.1 L825.0 998.8 L821.0 1000.7 L823.2 1004.9 L820.2 1004.4 L809.2 1005.3 L806.1 1002.4 Z" stroke="#00ffff" fill="none"/>
<path d="M807.9 997.0 L809.8 995.2 L820.4 995.2 L820.6 1002.7 L810.1 1003.4 L808.1 1001.8 Z" stroke="#ff0000" fill="none"/>
<path d="M810.9 997.5 L819.9 997.2" stroke="#ff0000" fill="none"/>
<path d="M811.1 1001.1 L820.0 1000.8" stroke="#ff0000" fill="none"/>
<path d="M798.0 999.7 L806.0 999.5" stroke="#00ffff" fill="none"/>
<path d="M803.8 1006.7 L808.0 1007.6 L813.3 1017.3 L815.4 1019.5 L810.8 1020.0 L811.4 1024.4 L807.7 1022.0 L805.2 1025.9 L804.1 1023.0 L797.8 1014.0 L798.8 1009.9 Z" stroke="#00ffff" fill="none"/>
<path d="M804.4 1008.7 L806.9 1009.5 L812.1 1018.6 L805.8 1022.5 L800.0 1013.8 L800.3 1011.2 Z" stroke="#ff0000" fill="none"/>
<path d="M805.5 1011.6 L810.2 1019.2" stroke="#ff0000" fill="none"/>
<path d="M802.4 1013.5 L807.2 1021.1" stroke="#ff0000" fill="none"/>
<path d="M797.1 1001.5 L801.3 1008.3" stroke="#00ffff" fill="none"/>
<path d="M794.0 1010.0 L795.2 1014.1 L789.5 1023.5 L788.6 1026.5 L785.9 1022.7 L782.4 1025.4 L782.7 1021.0 L778.0 1020.8 L780.0 1018.5 L784.6 1008.5 L788.7 1007.2 Z" stroke="#00ffff" fill="none"/>
<path d="M792.5 1011.5 L793.0 1014.1 L787.8 1023.2 L781.2 1019.7 L785.8 1010.2 L788.2 1009.3 Z" stroke="#ff0000" fill="none"/>
<path d="M790.5 1013.9 L786.3 1021.8" stroke="#ff0000" fill="none"/>
<path d="M787.4 1012.2 L783.1 1020.1" stroke="#ff0000" fill="none"/>
<path d="M795.1 1001.6 L791.3 1008.6" stroke="#00ffff" fill="none"/>
<path d="M786.1 1003.1 L783.2 1006.3 L772.2 1006.0 L769.2 1006.7 L771.1 1002.5 L767.0 1000.8 L771.0 998.9 L768.8 994.7 L771.8 995.2 L782.8 994.3 L785.9 997.2 Z" stroke="#00ffff" fill="none"/>
<path d="M784.1 1002.6 L782.2 1004.4 L771.6 1004.4 L771.4 996.9 L781.9 996.2 L783.9 997.8 Z" stroke="#ff0000" fill="none"/>
<path d="M781.1 1002.1 L772.1 1002.4" stroke="#ff0000" fill="none"/>
<path d="M780.9 998.5 L772.0 998.8" stroke="#ff0000" fill="none"/>
<path d="M794.0 999.9 L786.0 1000.1" stroke="#00ffff" fill="none"/>
<path d="M793.5 998.3 L796.0 996.8 L798.5 998.3 L798.5 1001.3 L796.0 1002.8 L793.5 1001.3 Z" stroke="#00ffff" fill="none"/>
<path d="M894.6 982.2 L890.7 980.5 L887.1 970.1 L885.4 967.5 L890.1 967.8 L890.2 963.4 L893.4 966.4 L896.5 963.0 L897.1 966.0 L901.8 976.0 L900.1 979.9 Z" stroke="#00ffff" fill="none"/>
<path d="M894.4 980.1 L892.1 978.8 L888.5 969.0 L895.4 966.2 L899.6 975.8 L898.8 978.3 Z" stroke="#ff0000" fill="none"/>
<path d="M893.8 977.1 L890.4 968.7" stroke="#ff0000" fill="none"/>
<path d="M897.1 975.7 L893.8 967.4" stroke="#ff0000" fill="none"/>
<path d="M900.4 988.4 L897.4 981.0" stroke="#00ffff" fill="none"/>
<path d="M904.9 980.6 L904.4 976.4 L911.6 968.1 L913.0 965.3 L915.1 969.5 L919.0 967.4 L917.9 971.7 L922.5 972.7 L920.1 974.7 L913.8 983.7 L909.6 984.3 Z" stroke="#00ffff" fill="none"/>
<path d="M906.6 979.4 L906.5 976.8 L913.3 968.7 L919.1 973.3 L912.9 981.8 L910.4 982.3 Z" stroke="#ff0000" fill="none"/>
<path d="M908.9 977.4 L914.5 970.3" stroke="#ff0000" fill="none"/>
<path d="M911.8 979.6 L917.3 972.5" stroke="#ff0000" fill="none"/>
<path d="M902.3 988.7 L907.3 982.4" stroke="#00ffff" fill="none"/>
<path d="M911.4 988.7 L914.8 986.2 L925.6 988.3 L928.7 988.1 L926.1 992.0 L929.8 994.3 L925.6 995.6 L927.0 1000.0 L924.1 999.0 L913.1 998.1 L910.6 994.7 Z" stroke="#00ffff" fill="none"/>
<path d="M913.3 989.6 L915.5 988.2 L925.9 990.0 L924.8 997.4 L914.4 996.3 L912.6 994.3 Z" stroke="#ff0000" fill="none"/>
<path d="M916.2 990.6 L925.1 991.9" stroke="#ff0000" fill="none"/>
<path d="M915.7 994.2 L924.6 995.4" stroke="#ff0000" fill="none"/>
<path d="M903.1 990.6 L911.0 991.7" stroke="#00ffff" fill="none"/>
<path d="M907.6 998.4 L911.5 1000.1 L915.1 1010.5 L916.8 1013.1 L912.1 1012.8 L912.0 1017.2 L908.8 1014.2 L905.7 1017.6 L905.1 1014.6 L900.4 1004.6 L902.1 1000.7 Z" stroke="#00ffff" fill="none"/>
<path d="M907.8 1000.5 L910.1 1001.8 L913.7 1011.6 L906.8 1014.4 L902.6 1004.8 L903.4 1002.3 Z" stroke="#ff0000" fill="none"/>
<path d="M908.4 1003.5 L911.8 1011.9" stroke="#ff0000" fill="none"/>
<path d="M905.1 1004.9 L908.4 1013.2" stroke="#ff0000" fill="none"/>
<path d="M901.8 992.2 L904.8 999.6" stroke="#00ffff" fill="none"/>
<path d="M897.3 1000.0 L897.8 1004.2 L890.6 1012.5 L889.2 1015.3 L887.1 1011.1 L883.2 1013.2 L884.3 1008.9 L879.7 1007.9 L882.1 1005.9 L888.4 996.9 L892.6 996.3 Z" stroke="#00ffff" fill="none"/>
<path d="M895.6 1001.2 L895.7 1003.8 L888.9 1011.9 L883.1 1007.3 L889.3 998.8 L891.8 998.3 Z" stroke="#ff0000" fill="none"/>
<path d="M893.3 1003.2 L887.7 1010.3" stroke="#ff0000" fill="none"/>
<path d="M890.4 1001.0 L884.9 1008.1" stroke="#ff0000" fill="none"/>
<path d="M899.9 991.9 L894.9 998.2" stroke="#00ffff" fill="none"/>
<path d="M890.8 991.9 L887.4 994.4 L876.6 992.3 L873.5 992.5 L876.1 988.6 L872.4 986.3 L876.6 985.0 L875.2 980.6 L878.1 981.6 L889.1 982.5 L891.6 985.9 Z" stroke="#00ffff" fill="none"/>
<path d="M888.9 991.0 L886.7 992.4 L876.3 990.6 L877.4 983.2 L887.8 984.3 L889.6 986.3 Z" stroke="#ff0000" fill="none"/>
<path d="M886.0 990.0 L877.1 988.7" stroke="#ff0000" fill="none"/>
<path d="M886.5 986.4 L877.6 985.2" stroke="#ff0000" fill="none"/>
<path d="M899.1 990.0 L891.2 988.9" stroke="#00ffff" fill="none"/>
<path d="M898.6 988.8 L901.1 987.3 L903.6 988.8 L903.6 991.8 L901.1 993.3 L898.6 991.8 Z" stroke="#00ffff" fill="none"/>
<circle cx="859.5" cy="967.5" r="3.6" fill="#fff" stroke="none"/>
<path d="M207.0 1059.5 L232.0 1059.5" stroke="#ff0000" fill="none" stroke-width="2"/>
<path d="M219.5 1047.0 L219.5 1072.0" stroke="#ff0000" fill="none" stroke-width="2"/>
</g></svg></div>
<div id="txt" class="ab">
<div class="gl" style="left:0px;top:0.8px">G90</div>
<div class="gl" style="left:0px;top:24.8px">G00 X115.7959 Y151.8269</div>
<div class="gl" style="left:0px;top:48.8px">G01 X117.4343 Y154.1360 F200.0000</div>
<div class="gl" style="left:0px;top:72.8px">G01 X119.0617 Y157.0805 F200.0000</div>
<div class="gl" style="left:0px;top:96.8px">G01 X120.3491 Y160.1886 F200.0000</div>
<div class="gl" style="left:0px;top:120.8px">G01 X121.2805 Y163.4213 F200.0000</div>
<div class="gl" style="left:0px;top:144.8px">G01 X121.8440 Y166.7380 F200.0000</div>
<div class="gl" style="left:0px;top:168.8px">G01 X122.0326 Y170.0970 F200.0000</div>
<div class="gl" style="left:0px;top:192.8px">G01 X121.8440 Y173.4559 F200.0000</div>
<div class="gl" style="left:0px;top:216.8px">G01 X121.2805 Y176.7726 F200.0000</div>
<div class="gl" style="left:0px;top:240.8px">G01 X120.3491 Y180.0053 F200.0000</div>
<div class="gl" style="left:0px;top:264.8px">G01 X119.0617 Y183.1135 F200.0000</div>
<div class="gl" style="left:0px;top:288.8px">G01 X117.4343 Y186.0579 F200.0000</div>
<div class="gl" style="left:0px;top:312.8px">G01 X115.4876 Y188.8017 F200.0000</div>
<div class="gl" style="left:0px;top:336.8px">G01 X113.2458 Y191.3102 F200.0000</div>
<div class="gl" style="left:0px;top:360.8px">G01 X110.7373 Y193.5519 F200.0000</div>
<div class="gl" style="left:0px;top:384.8px">G01 X107.9936 Y195.4987 F200.0000</div>
<div class="gl" style="left:0px;top:408.8px">G01 X105.0491 Y197.1260 F200.0000</div>
<div class="gl" style="left:0px;top:432.8px">G01 X101.9410 Y198.4135 F200.0000</div>
<div class="gl" style="left:0px;top:456.8px">G01 X98.7082 Y199.3448 F200.0000</div>
<div class="gl" style="left:0px;top:480.8px">G01 X95.3916 Y199.9083 F200.0000</div>
<div class="gl" style="left:0px;top:504.8px">G01 X92.0326 Y200.0970 F200.0000</div>
<div class="gl" style="left:0px;top:528.8px">G01 X88.6737 Y199.9083 F200.0000</div>
<div class="gl" style="left:0px;top:552.8px">G01 X85.3570 Y199.3448 F200.0000</div>
<div class="gl" style="left:0px;top:576.8px">G01 X82.1242 Y198.4135 F200.0000</div>
<div class="gl" style="left:0px;top:600.8px">G01 X79.0161 Y197.1260 F200.0000</div>
<div class="gl" style="left:0px;top:624.8px">G01 X76.0717 Y195.4987 F200.0000</div>
<div class="gl" style="left:0px;top:648.8px">G01 X73.3279 Y193.5519 F200.0000</div>
<div class="gl" style="left:0px;top:672.8px">G01 X70.8194 Y191.3102 F200.0000</div>
<div class="gl" style="left:0px;top:696.8px">G01 X68.5777 Y188.8017 F200.0000</div>
<div class="gl" style="left:0px;top:720.8px">G01 X66.6309 Y186.0579 F200.0000</div>
<div class="gl" style="left:0px;top:744.8px">G01 X65.0036 Y183.1135 F200.0000</div>
<div class="gl" style="left:0px;top:768.8px">G01 X63.7161 Y180.0053 F200.0000</div>
<div class="gl" style="left:0px;top:792.8px">G01 X62.7848 Y176.7726 F200.0000</div>
<div class="gl" style="left:0px;top:816.8px">G01 X62.2213 Y173.4559 F200.0000</div>
<div class="gl" style="left:0px;top:840.8px">G01 X62.0326 Y170.0970 F200.0000</div>
<div class="gl" style="left:0px;top:864.8px">G01 X62.2213 Y166.7380 F200.0000</div>
<div class="gl" style="left:0px;top:888.8px">G01 X62.7848 Y163.4213 F200.0000</div>
<div class="gl" style="left:0px;top:912.8px">G01 X63.7161 Y160.1886 F200.0000</div>
<div class="gl" style="left:0px;top:936.8px">G01 X65.0036 Y157.0805 F200.0000</div>
</div>
<div id="sb" class="ab"></div><div id="thumb" class="ab"></div>
<div class="ab" style="left:1px;top:1080px;width:1896px;height:4px;background:#fff"></div>
<div class="ab" style="left:0;top:1107px;width:1897px;height:2px;background:#a0a0a0"></div><div class="ab" style="left:0;top:1110px;width:1897px;height:1px;background:#ababab"></div><div class="ab" style="left:0;top:1116px;width:1897px;height:1px;background:#a8a8a8"></div>
<div id="status" class="ab"></div>
<div class="ab" style="left:1px;top:1084px;width:803px;height:22px;border-top:1px solid #a0a0a0"></div>
<div class="ab" style="left:806px;top:1084px;width:456px;height:22px;border-top:1px solid #a0a0a0;border-left:1px solid #a0a0a0"></div>
<div class="ab" style="left:1265px;top:1084px;width:606px;height:22px;border-top:1px solid #a0a0a0;border-left:1px solid #a0a0a0;border-right:1px solid #fff"></div>
<svg class="ab" style="left:1880px;top:1090px" width="17" height="17"><path d="M4 16L16 4M9 16L16 9M14 16L16 14" stroke="#a0a0a0" stroke-width="1.5"/></svg>
<div class="st" style="left:3px">就绪</div>
<div class="st" style="left:808px;font-size:19px">X:-46.3433, Y:1257.4251</div>
<div class="st" style="left:1267px">深圳市正运动技术有限公司</div>
</body></html>
